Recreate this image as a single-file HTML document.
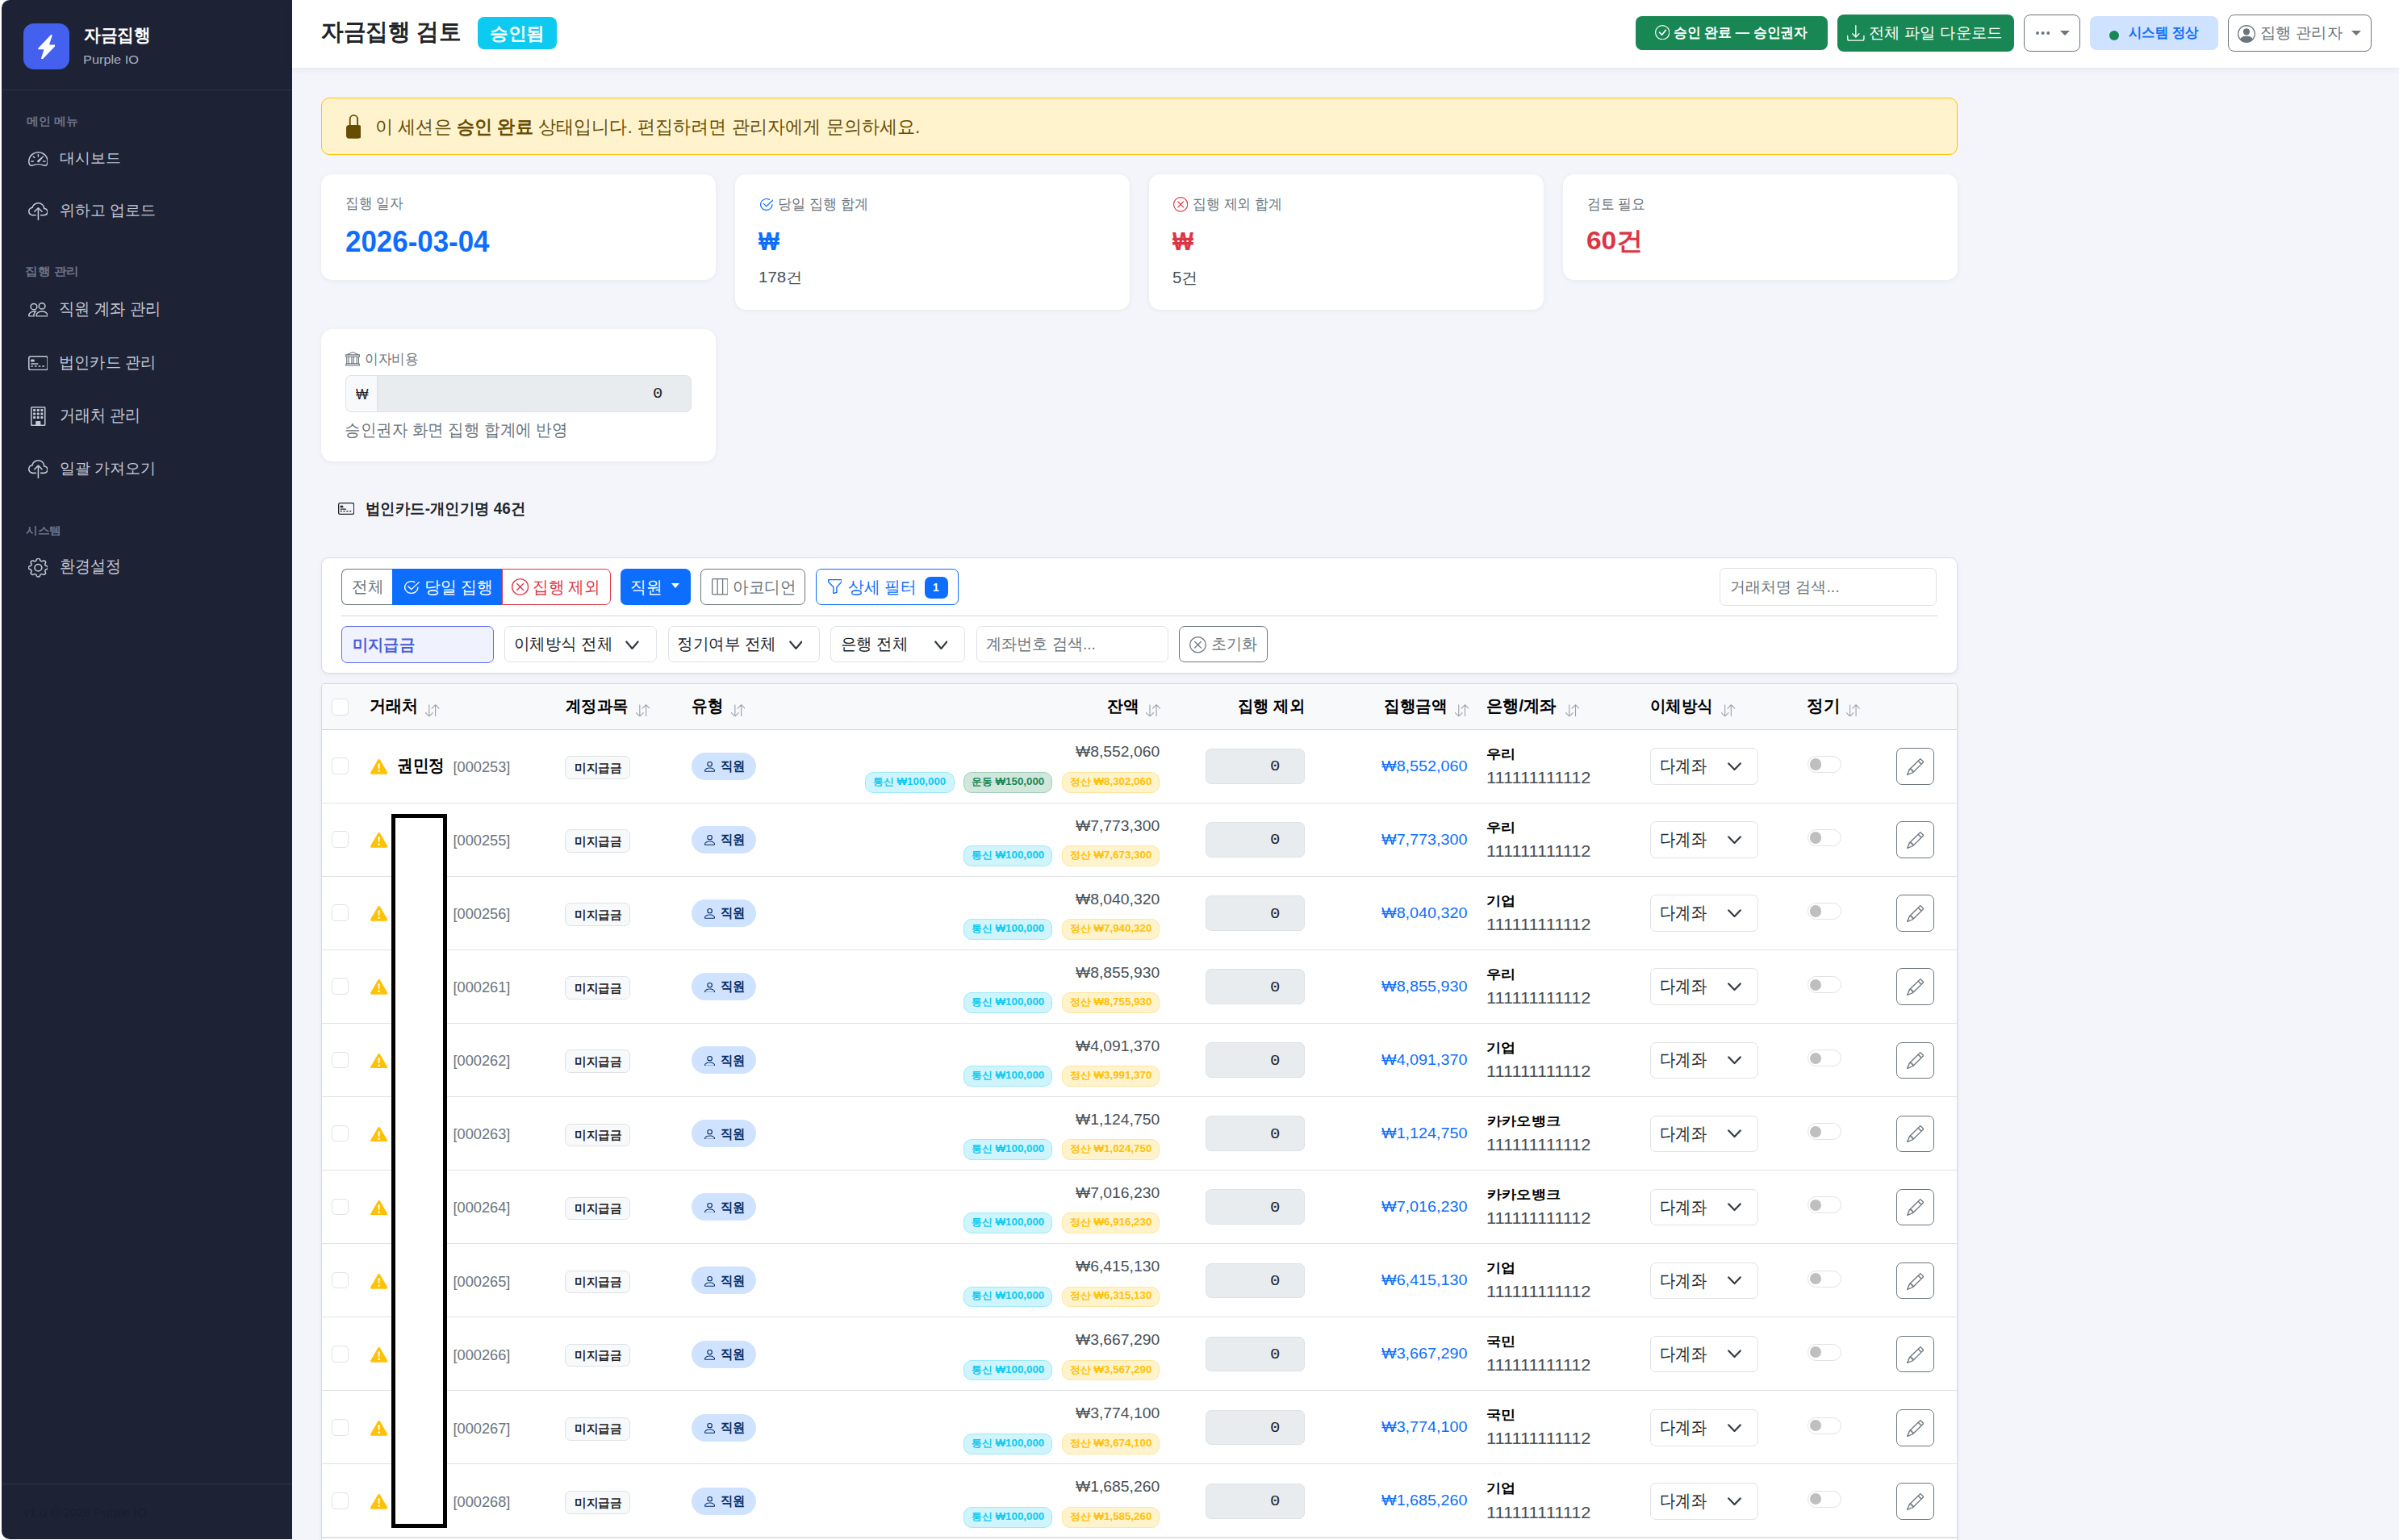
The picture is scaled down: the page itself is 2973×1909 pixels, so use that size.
<!DOCTYPE html><html lang='ko'><head><meta charset='utf-8'><title>자금집행 검토</title><style>html,body{margin:0;padding:0;width:2973px;height:1909px;overflow:hidden;background:#f3f4f9;}body{position:relative;font-family:"Liberation Sans", sans-serif;}b{font-weight:700}</style></head><body><div style='position:absolute;left:0px;top:0px;width:2973px;height:1909px;box-sizing:border-box;background:#f4f5fa'></div>
<div style='position:absolute;left:0px;top:0px;width:362px;height:1909px;box-sizing:border-box;background:#ffffff'></div>
<div style='position:absolute;left:2px;top:0px;width:360px;height:1908px;box-sizing:border-box;background:#1e2235;border-radius:10px 0 0 10px'></div>
<div style='position:absolute;left:2px;top:110.5px;width:360px;height:1.0px;box-sizing:border-box;background:#2e3346'></div>
<div style='position:absolute;left:2px;top:1839px;width:360px;height:1px;box-sizing:border-box;background:#2e3346'></div>
<div style='position:absolute;left:29px;top:29px;width:57px;height:57px;box-sizing:border-box;background:#4361ee;border-radius:13px'></div>
<svg style='position:absolute;left:46.7px;top:42.5px;width:21.599999999999994px;height:30.799999999999997px;' viewBox='2.45 0 11.1 16' fill='#ffffff' preserveAspectRatio='none'><path fill-rule='evenodd' d='M11.251.068a.5.5 0 0 1 .227.58L9.677 6.5H13a.5.5 0 0 1 .364.843l-8 8.5a.5.5 0 0 1-.842-.49L6.323 9.5H3a.5.5 0 0 1-.364-.843l8-8.5a.5.5 0 0 1 .615-.09z'/></svg>
<svg style='position:absolute;left:34.7px;top:188px;width:24.799999999999997px;height:18px;' viewBox='0 2 16 12.1' fill='#c3c8d4' preserveAspectRatio='none'><path fill-rule='evenodd' d='M8 4a.5.5 0 0 1 .5.5V6a.5.5 0 0 1-1 0V4.5A.5.5 0 0 1 8 4zM3.732 5.732a.5.5 0 0 1 .707 0l.915.914a.5.5 0 1 1-.708.708l-.914-.915a.5.5 0 0 1 0-.707zM2 10a.5.5 0 0 1 .5-.5h1.586a.5.5 0 0 1 0 1H2.5A.5.5 0 0 1 2 10zm9.5 0a.5.5 0 0 1 .5-.5h1.5a.5.5 0 0 1 0 1H12a.5.5 0 0 1-.5-.5zm.754-4.246a.389.389 0 0 0-.527-.02L7.547 9.31a.91.91 0 1 0 1.302 1.258l3.434-4.297a.389.389 0 0 0-.029-.518z'/><path fill-rule='evenodd' d='M0 10a8 8 0 1 1 15.547 2.661c-.442 1.253-1.845 1.602-2.932 1.25C11.309 13.488 9.475 13 8 13c-1.474 0-3.31.488-4.615.911-1.087.352-2.49.003-2.932-1.25A7.988 7.988 0 0 1 0 10zm8-7a7 7 0 0 0-6.603 9.329c.203.575.923.876 1.68.63C4.397 12.533 6.358 12 8 12s3.604.532 4.923.96c.757.245 1.477-.056 1.68-.631A7 7 0 0 0 8 3z'/></svg>
<svg style='position:absolute;left:34.7px;top:250.6px;width:24.799999999999997px;height:22.400000000000006px;' viewBox='0 0 16 15' fill='#c3c8d4' preserveAspectRatio='none'><path fill-rule='evenodd' d='M4.406 1.342A5.53 5.53 0 0 1 8 0c2.69 0 4.923 2 5.166 4.579C14.758 4.804 16 6.137 16 7.773 16 9.569 14.502 11 12.687 11H10a.5.5 0 0 1 0-1h2.688C13.979 10 15 8.988 15 7.773c0-1.216-1.02-2.228-2.313-2.228h-.5v-.5C12.188 2.825 10.328 1 8 1a4.53 4.53 0 0 0-2.941 1.1c-.757.652-1.153 1.438-1.153 2.055v.448l-.445.049C2.064 4.805 1 5.952 1 7.318 1 8.785 2.23 10 3.781 10H6a.5.5 0 0 1 0 1H3.781C1.708 11 0 9.366 0 7.318c0-1.763 1.266-3.223 2.942-3.593.143-.863.698-1.723 1.464-2.383z'/><path fill-rule='evenodd' d='M7.646 4.146a.5.5 0 0 1 .708 0l3 3a.5.5 0 0 1-.708.708L8.5 5.707V14.5a.5.5 0 0 1-1 0V5.707L5.354 7.854a.5.5 0 1 1-.708-.708l3-3z'/></svg>
<svg style='position:absolute;left:34.7px;top:375.4px;width:24.799999999999997px;height:17.600000000000023px;' viewBox='0 2 16 12' fill='#c3c8d4' preserveAspectRatio='none'><path fill-rule='evenodd' d='M15 14s1 0 1-1-1-4-5-4-5 3-5 4 1 1 1 1h8Zm-7.978-1A.261.261 0 0 1 7 12.996c.001-.264.167-1.03.76-1.72C8.312 10.629 9.282 10 11 10c1.717 0 2.687.63 3.24 1.276.593.69.758 1.457.76 1.72l-.008.002a.274.274 0 0 1-.014.002H7.022ZM11 7a2 2 0 1 0 0-4 2 2 0 0 0 0 4Zm3-2a3 3 0 1 1-6 0 3 3 0 0 1 6 0ZM6.936 9.28a5.88 5.88 0 0 0-1.23-.247A7.35 7.35 0 0 0 5 9c-4 0-5 3-5 4 0 .667.333 1 1 1h4.216A2.238 2.238 0 0 1 5 13c0-1.01.377-2.042 1.09-2.904.243-.294.526-.569.846-.816ZM4.92 10A5.493 5.493 0 0 0 4 13H1c0-.26.164-1.03.76-1.724.545-.636 1.492-1.256 3.16-1.275ZM1.5 5.5a3 3 0 1 1 6 0 3 3 0 0 1-6 0Zm3-2a2 2 0 1 0 0 4 2 2 0 0 0 0-4Z'/></svg>
<svg style='position:absolute;left:34.7px;top:440.7px;width:24.799999999999997px;height:18.30000000000001px;' viewBox='0 2 16 12' fill='#c3c8d4' preserveAspectRatio='none'><path fill-rule='evenodd' d='M14 3a1 1 0 0 1 1 1v8a1 1 0 0 1-1 1H2a1 1 0 0 1-1-1V4a1 1 0 0 1 1-1h12zM2 2a2 2 0 0 0-2 2v8a2 2 0 0 0 2 2h12a2 2 0 0 0 2-2V4a2 2 0 0 0-2-2H2z'/><path fill-rule='evenodd' d='M2 5.5a.5.5 0 0 1 .5-.5h2a.5.5 0 0 1 .5.5v1a.5.5 0 0 1-.5.5h-2a.5.5 0 0 1-.5-.5v-1zm0 3a.5.5 0 0 1 .5-.5h5a.5.5 0 0 1 0 1h-5a.5.5 0 0 1-.5-.5zm0 2a.5.5 0 0 1 .5-.5h1a.5.5 0 0 1 0 1h-1a.5.5 0 0 1-.5-.5zm3 0a.5.5 0 0 1 .5-.5h1a.5.5 0 0 1 0 1h-1a.5.5 0 0 1-.5-.5zm3 0a.5.5 0 0 1 .5-.5h1a.5.5 0 0 1 0 1h-1a.5.5 0 0 1-.5-.5zm3 0a.5.5 0 0 1 .5-.5h1a.5.5 0 0 1 0 1h-1a.5.5 0 0 1-.5-.5z'/></svg>
<svg style='position:absolute;left:38px;top:504px;width:18.5px;height:24px;' viewBox='2 0 12 16' fill='#c3c8d4' preserveAspectRatio='none'><path fill-rule='evenodd' d='M4 2.5a.5.5 0 0 1 .5-.5h1a.5.5 0 0 1 .5.5v1a.5.5 0 0 1-.5.5h-1a.5.5 0 0 1-.5-.5v-1Zm3 0a.5.5 0 0 1 .5-.5h1a.5.5 0 0 1 .5.5v1a.5.5 0 0 1-.5.5h-1a.5.5 0 0 1-.5-.5v-1Zm3.5-.5a.5.5 0 0 0-.5.5v1a.5.5 0 0 0 .5.5h1a.5.5 0 0 0 .5-.5v-1a.5.5 0 0 0-.5-.5h-1ZM4 5.5a.5.5 0 0 1 .5-.5h1a.5.5 0 0 1 .5.5v1a.5.5 0 0 1-.5.5h-1a.5.5 0 0 1-.5-.5v-1ZM7.5 5a.5.5 0 0 0-.5.5v1a.5.5 0 0 0 .5.5h1a.5.5 0 0 0 .5-.5v-1a.5.5 0 0 0-.5-.5h-1Zm2.5.5a.5.5 0 0 1 .5-.5h1a.5.5 0 0 1 .5.5v1a.5.5 0 0 1-.5.5h-1a.5.5 0 0 1-.5-.5v-1ZM4.5 8a.5.5 0 0 0-.5.5v1a.5.5 0 0 0 .5.5h1a.5.5 0 0 0 .5-.5v-1a.5.5 0 0 0-.5-.5h-1Zm2.5.5a.5.5 0 0 1 .5-.5h1a.5.5 0 0 1 .5.5v1a.5.5 0 0 1-.5.5h-1a.5.5 0 0 1-.5-.5v-1Zm3.5-.5a.5.5 0 0 0-.5.5v1a.5.5 0 0 0 .5.5h1a.5.5 0 0 0 .5-.5v-1a.5.5 0 0 0-.5-.5h-1Z'/><path fill-rule='evenodd' d='M2 1a1 1 0 0 1 1-1h10a1 1 0 0 1 1 1v14a1 1 0 0 1-1 1H3a1 1 0 0 1-1-1V1Zm11 0H3v14h3v-2.5a.5.5 0 0 1 .5-.5h3a.5.5 0 0 1 .5.5V15h3V1Z'/></svg>
<svg style='position:absolute;left:34.7px;top:569.6px;width:24.799999999999997px;height:23.399999999999977px;' viewBox='0 0 16 15' fill='#c3c8d4' preserveAspectRatio='none'><path fill-rule='evenodd' d='M4.406 1.342A5.53 5.53 0 0 1 8 0c2.69 0 4.923 2 5.166 4.579C14.758 4.804 16 6.137 16 7.773 16 9.569 14.502 11 12.687 11H10a.5.5 0 0 1 0-1h2.688C13.979 10 15 8.988 15 7.773c0-1.216-1.02-2.228-2.313-2.228h-.5v-.5C12.188 2.825 10.328 1 8 1a4.53 4.53 0 0 0-2.941 1.1c-.757.652-1.153 1.438-1.153 2.055v.448l-.445.049C2.064 4.805 1 5.952 1 7.318 1 8.785 2.23 10 3.781 10H6a.5.5 0 0 1 0 1H3.781C1.708 11 0 9.366 0 7.318c0-1.763 1.266-3.223 2.942-3.593.143-.863.698-1.723 1.464-2.383z'/><path fill-rule='evenodd' d='M7.646 4.146a.5.5 0 0 1 .708 0l3 3a.5.5 0 0 1-.708.708L8.5 5.707V14.5a.5.5 0 0 1-1 0V5.707L5.354 7.854a.5.5 0 1 1-.708-.708l3-3z'/></svg>
<svg style='position:absolute;left:34.7px;top:692.4px;width:24.799999999999997px;height:23.399999999999977px;' viewBox='0.3 0.3 15.4 15.4' fill='#c3c8d4' preserveAspectRatio='none'><path fill-rule='evenodd' d='M8 4.754a3.246 3.246 0 1 0 0 6.492 3.246 3.246 0 0 0 0-6.492zM5.754 8a2.246 2.246 0 1 1 4.492 0 2.246 2.246 0 0 1-4.492 0z'/><path fill-rule='evenodd' d='M9.796 1.343c-.527-1.79-3.065-1.79-3.592 0l-.094.319a.873.873 0 0 1-1.255.52l-.292-.16c-1.64-.892-3.433.902-2.54 2.541l.159.292a.873.873 0 0 1-.52 1.255l-.319.094c-1.79.527-1.79 3.065 0 3.592l.319.094a.873.873 0 0 1 .52 1.255l-.16.292c-.892 1.64.901 3.434 2.541 2.54l.292-.159a.873.873 0 0 1 1.255.52l.094.319c.527 1.79 3.065 1.79 3.592 0l.094-.319a.873.873 0 0 1 1.255-.52l.292.16c1.64.893 3.434-.902 2.54-2.541l-.159-.292a.873.873 0 0 1 .52-1.255l.319-.094c1.79-.527 1.79-3.065 0-3.592l-.319-.094a.873.873 0 0 1-.52-1.255l.16-.292c.893-1.64-.902-3.433-2.541-2.54l-.292.159a.873.873 0 0 1-1.255-.52l-.094-.319zm-2.633.283c.246-.835 1.428-.835 1.674 0l.094.319a1.873 1.873 0 0 0 2.693 1.115l.291-.16c.764-.415 1.6.42 1.184 1.185l-.159.292a1.873 1.873 0 0 0 1.116 2.692l.318.094c.835.246.835 1.428 0 1.674l-.319.094a1.873 1.873 0 0 0-1.115 2.693l.16.291c.415.764-.42 1.6-1.185 1.184l-.291-.159a1.873 1.873 0 0 0-2.693 1.116l-.094.318c-.246.835-1.428.835-1.674 0l-.094-.319a1.873 1.873 0 0 0-2.692-1.115l-.292.16c-.764.415-1.6-.42-1.184-1.185l.159-.291A1.873 1.873 0 0 0 1.945 8.93l-.319-.094c-.835-.246-.835-1.428 0-1.674l.319-.094A1.873 1.873 0 0 0 3.06 4.377l-.16-.292c-.415-.764.42-1.6 1.185-1.184l.292.159a1.873 1.873 0 0 0 2.692-1.115l.094-.319z'/></svg>
<div style='position:absolute;left:362px;top:0px;width:2611px;height:84px;box-sizing:border-box;background:#fff;box-shadow:0 2px 8px rgba(33,37,41,.07)'></div>
<div style='position:absolute;left:592px;top:21px;width:97.5px;height:40px;box-sizing:border-box;background:#0dcaf0;border-radius:8px'></div>
<div style='position:absolute;left:2027px;top:20px;width:238px;height:42px;box-sizing:border-box;background:#198754;border-radius:8px'></div>
<svg style='position:absolute;left:2051px;top:30.5px;width:18.40000000000009px;height:18.5px;' viewBox='0 0 16 16' fill='#fff' preserveAspectRatio='none'><path fill-rule='evenodd' d='M8 15A7 7 0 1 1 8 1a7 7 0 0 1 0 14zm0 1A8 8 0 1 0 8 0a8 8 0 0 0 0 16z'/><path fill-rule='evenodd' d='M10.97 4.97a.75.75 0 0 1 1.07 1.05l-3.992 4.99a.75.75 0 0 1-1.08.02L4.324 8.384a.75.75 0 1 1 1.06-1.06l2.094 2.093 3.473-4.425a.267.267 0 0 1 .02-.022z'/></svg>
<div style='position:absolute;left:2277px;top:18px;width:219px;height:46px;box-sizing:border-box;background:#198754;border-radius:8px'></div>
<svg style='position:absolute;left:2289px;top:31px;width:21.59999999999991px;height:20px;' viewBox='0 1 16 14' fill='#fff' preserveAspectRatio='none'><path fill-rule='evenodd' d='M.5 9.9a.5.5 0 0 1 .5.5v2.5a1 1 0 0 0 1 1h12a1 1 0 0 0 1-1v-2.5a.5.5 0 0 1 1 0v2.5a2 2 0 0 1-2 2H2a2 2 0 0 1-2-2v-2.5a.5.5 0 0 1 .5-.5z'/><path fill-rule='evenodd' d='M7.646 11.854a.5.5 0 0 0 .708 0l3-3a.5.5 0 0 0-.708-.708L8.5 10.293V1.5a.5.5 0 0 0-1 0v8.793L5.354 8.146a.5.5 0 1 0-.708.708l3 3z'/></svg>
<div style='position:absolute;left:2508px;top:18px;width:70px;height:46px;box-sizing:border-box;border:1.5px solid #6c757d;border-radius:8px;background:#fff'></div>
<svg style='position:absolute;left:2522.7px;top:39.2px;width:17.300000000000182px;height:4.0px;' viewBox='1.5 6.5 13 3' fill='#6c757d' preserveAspectRatio='none'><path fill-rule='evenodd' d='M3 9.5a1.5 1.5 0 1 1 0-3 1.5 1.5 0 0 1 0 3zm5 0a1.5 1.5 0 1 1 0-3 1.5 1.5 0 0 1 0 3zm5 0a1.5 1.5 0 1 1 0-3 1.5 1.5 0 0 1 0 3z'/></svg>
<div style='position:absolute;left:2552.9px;top:38px;width:0;height:0;border-left:6px solid transparent;border-right:6px solid transparent;border-top:6px solid #6c757d'></div>
<div style='position:absolute;left:2590px;top:20px;width:159px;height:42px;box-sizing:border-box;background:#cfe2ff;border-radius:8px'></div>
<div style='position:absolute;left:2613.8px;top:38.2px;width:12px;height:12px;border-radius:50%;background:#198754'></div>
<div style='position:absolute;left:2761px;top:18px;width:178px;height:46px;box-sizing:border-box;border:1.5px solid #6c757d;border-radius:8px;background:#fff'></div>
<svg style='position:absolute;left:2773px;top:31px;width:22px;height:22px;' viewBox='0 0 16 16' fill='#6c757d' preserveAspectRatio='none'><path fill-rule='evenodd' d='M11 6a3 3 0 1 1-6 0 3 3 0 0 1 6 0z'/><path fill-rule='evenodd' d='M0 8a8 8 0 1 1 16 0A8 8 0 0 1 0 8zm8-7a7 7 0 0 0-5.468 11.37C3.242 11.226 4.805 10 8 10s4.757 1.225 5.468 2.37A7 7 0 0 0 8 1z'/></svg>
<div style='position:absolute;left:2914px;top:38px;width:0;height:0;border-left:6px solid transparent;border-right:6px solid transparent;border-top:6px solid #6c757d'></div>
<div style='position:absolute;left:398px;top:121px;width:2028px;height:71px;box-sizing:border-box;background:#fff3cd;border:1.5px solid #ffc107;border-radius:10px'></div>
<svg style='position:absolute;left:428.7px;top:142px;width:18.80000000000001px;height:29.69999999999999px;' viewBox='3 0 10 16' fill='#664d03' preserveAspectRatio='none'><path fill-rule='evenodd' d='M8 1a2 2 0 0 1 2 2v4H6V3a2 2 0 0 1 2-2zm3 6V3a3 3 0 0 0-6 0v4a2 2 0 0 0-2 2v5a2 2 0 0 0 2 2h6a2 2 0 0 0 2-2V9a2 2 0 0 0-2-2z'/></svg>
<div style='position:absolute;left:398px;top:216px;width:489px;height:131px;box-sizing:border-box;background:#fff;border-radius:14px;box-shadow:0 1px 6px rgba(30,34,60,.06)'></div>
<div style='position:absolute;left:911px;top:216px;width:489px;height:168px;box-sizing:border-box;background:#fff;border-radius:14px;box-shadow:0 1px 6px rgba(30,34,60,.06)'></div>
<div style='position:absolute;left:1424px;top:216px;width:489px;height:168px;box-sizing:border-box;background:#fff;border-radius:14px;box-shadow:0 1px 6px rgba(30,34,60,.06)'></div>
<div style='position:absolute;left:1937px;top:216px;width:489px;height:131px;box-sizing:border-box;background:#fff;border-radius:14px;box-shadow:0 1px 6px rgba(30,34,60,.06)'></div>
<svg style='position:absolute;left:941.7px;top:245.5px;width:16.799999999999955px;height:15.0px;' viewBox='1.5 1.5 14 13' fill='#0d6efd' preserveAspectRatio='none'><path fill-rule='evenodd' d='M2.5 8a5.5 5.5 0 0 1 8.25-4.764.5.5 0 0 0 .5-.866A6.5 6.5 0 1 0 14.5 8a.5.5 0 0 0-1 0 5.5 5.5 0 1 1-11 0z'/><path fill-rule='evenodd' d='M15.354 3.354a.5.5 0 0 0-.708-.708L8 9.293 5.354 6.646a.5.5 0 1 0-.708.708l3 3a.5.5 0 0 0 .708 0l7-7z'/></svg>
<svg style='position:absolute;left:1453.75px;top:243.75px;width:18.25px;height:18.75px;' viewBox='0 0 16 16' fill='#dc3545' preserveAspectRatio='none'><path fill-rule='evenodd' d='M8 15A7 7 0 1 1 8 1a7 7 0 0 1 0 14zm0 1A8 8 0 1 0 8 0a8 8 0 0 0 0 16z'/><path fill-rule='evenodd' d='M4.646 4.646a.5.5 0 0 1 .708 0L8 7.293l2.646-2.647a.5.5 0 0 1 .708.708L8.707 8l2.647 2.646a.5.5 0 0 1-.708.708L8 8.707l-2.647 2.647a.5.5 0 0 1-.708-.708L7.293 8 4.646 5.354a.5.5 0 0 1 0-.708z'/></svg>
<div style='position:absolute;left:398px;top:408px;width:489px;height:163.5px;box-sizing:border-box;background:#fff;border-radius:14px;box-shadow:0 1px 6px rgba(30,34,60,.06)'></div>
<svg style='position:absolute;left:428px;top:436.4px;width:18.19999999999999px;height:17.600000000000023px;' viewBox='0 0 16 16' fill='#6c757d' preserveAspectRatio='none'><path fill-rule='evenodd' d='m8 0 6.61 3h.89a.5.5 0 0 1 .5.5v2a.5.5 0 0 1-.5.5H15v7a.5.5 0 0 1 .485.38l.5 2a.498.498 0 0 1-.485.62H.5a.498.498 0 0 1-.485-.62l.5-2A.501.501 0 0 1 1 13V6H.5a.5.5 0 0 1-.5-.5v-2A.5.5 0 0 1 .5 3h.89L8 0ZM3.777 3h8.447L8 1 3.777 3ZM2 6v7h1V6H2Zm2 0v7h2.5V6H4Zm3.5 0v7h1V6h-1Zm2 0v7H12V6H9.5ZM13 6v7h1V6h-1Zm2-1V4H1v1h14Zm-.39 9H1.39l-.25 1h13.72l-.25-1Z'/></svg>
<div style='position:absolute;left:428px;top:465px;width:429px;height:45.5px;box-sizing:border-box;border:1px solid #dee2e6;border-radius:7px;background:#e9ecef;overflow:hidden'></div>
<div style='position:absolute;left:429px;top:466px;width:39.30000000000001px;height:43.5px;box-sizing:border-box;background:#f8f9fa;border-radius:6px 0 0 6px;border-right:1px solid #dee2e6'></div>
<svg style='position:absolute;left:418.75px;top:623px;width:20.25px;height:15px;' viewBox='0 2 16 12' fill='#212529' preserveAspectRatio='none'><path fill-rule='evenodd' d='M14 3a1 1 0 0 1 1 1v8a1 1 0 0 1-1 1H2a1 1 0 0 1-1-1V4a1 1 0 0 1 1-1h12zM2 2a2 2 0 0 0-2 2v8a2 2 0 0 0 2 2h12a2 2 0 0 0 2-2V4a2 2 0 0 0-2-2H2z'/><path fill-rule='evenodd' d='M2 5.5a.5.5 0 0 1 .5-.5h2a.5.5 0 0 1 .5.5v1a.5.5 0 0 1-.5.5h-2a.5.5 0 0 1-.5-.5v-1zm0 3a.5.5 0 0 1 .5-.5h5a.5.5 0 0 1 0 1h-5a.5.5 0 0 1-.5-.5zm0 2a.5.5 0 0 1 .5-.5h1a.5.5 0 0 1 0 1h-1a.5.5 0 0 1-.5-.5zm3 0a.5.5 0 0 1 .5-.5h1a.5.5 0 0 1 0 1h-1a.5.5 0 0 1-.5-.5zm3 0a.5.5 0 0 1 .5-.5h1a.5.5 0 0 1 0 1h-1a.5.5 0 0 1-.5-.5zm3 0a.5.5 0 0 1 .5-.5h1a.5.5 0 0 1 0 1h-1a.5.5 0 0 1-.5-.5z'/></svg>
<div style='position:absolute;left:398px;top:691px;width:2028px;height:144px;box-sizing:border-box;background:#fff;border:1px solid #d9dde2;border-radius:9px;box-shadow:0 2px 6px rgba(0,0,0,.06)'></div>
<div style='position:absolute;left:423.3px;top:705px;width:62.89999999999998px;height:44.700000000000045px;box-sizing:border-box;border:1.5px solid #6c757d;border-right:none;border-radius:7px 0 0 7px;background:#fff'></div>
<div style='position:absolute;left:486.2px;top:705px;width:135.50000000000006px;height:44.700000000000045px;box-sizing:border-box;background:#0d6efd'></div>
<div style='position:absolute;left:621.7px;top:705px;width:135.0px;height:44.700000000000045px;box-sizing:border-box;border:1.5px solid #dc3545;border-radius:0 7px 7px 0;background:#fff'></div>
<svg style='position:absolute;left:500.8px;top:719.7px;width:18.900000000000034px;height:16.09999999999991px;' viewBox='1.5 1.5 14 13' fill='#fff' preserveAspectRatio='none'><path fill-rule='evenodd' d='M2.5 8a5.5 5.5 0 0 1 8.25-4.764.5.5 0 0 0 .5-.866A6.5 6.5 0 1 0 14.5 8a.5.5 0 0 0-1 0 5.5 5.5 0 1 1-11 0z'/><path fill-rule='evenodd' d='M15.354 3.354a.5.5 0 0 0-.708-.708L8 9.293 5.354 6.646a.5.5 0 1 0-.708.708l3 3a.5.5 0 0 0 .708 0l7-7z'/></svg>
<svg style='position:absolute;left:633.7px;top:717px;width:21.299999999999955px;height:21px;' viewBox='0 0 16 16' fill='#dc3545' preserveAspectRatio='none'><path fill-rule='evenodd' d='M8 15A7 7 0 1 1 8 1a7 7 0 0 1 0 14zm0 1A8 8 0 1 0 8 0a8 8 0 0 0 0 16z'/><path fill-rule='evenodd' d='M4.646 4.646a.5.5 0 0 1 .708 0L8 7.293l2.646-2.647a.5.5 0 0 1 .708.708L8.707 8l2.647 2.646a.5.5 0 0 1-.708.708L8 8.707l-2.647 2.647a.5.5 0 0 1-.708-.708L7.293 8 4.646 5.354a.5.5 0 0 1 0-.708z'/></svg>
<div style='position:absolute;left:769.2px;top:705px;width:86.59999999999991px;height:44.700000000000045px;box-sizing:border-box;background:#0d6efd;border-radius:7px'></div>
<div style='position:absolute;left:831.6px;top:723.4px;width:0;height:0;border-left:5.7px solid transparent;border-right:5.7px solid transparent;border-top:6.5px solid #fff'></div>
<div style='position:absolute;left:868.3px;top:705px;width:130.20000000000005px;height:44.700000000000045px;box-sizing:border-box;border:1.5px solid #6c757d;border-radius:7px;background:#fff'></div>
<svg style='position:absolute;left:881.5px;top:717px;width:20.700000000000045px;height:20.600000000000023px;' viewBox='0 0 16 16' fill='#6c757d' preserveAspectRatio='none'><path fill-rule='evenodd' d='M0 1.5A1.5 1.5 0 0 1 1.5 0h13A1.5 1.5 0 0 1 16 1.5v13a1.5 1.5 0 0 1-1.5 1.5h-13A1.5 1.5 0 0 1 0 14.5v-13zM1.5 1a.5.5 0 0 0-.5.5v13a.5.5 0 0 0 .5.5H5V1H1.5zM10 15V1H6v14h4zm1 0h3.5a.5.5 0 0 0 .5-.5v-13a.5.5 0 0 0-.5-.5H11v14z'/></svg>
<div style='position:absolute;left:1011.4px;top:705px;width:176.5000000000001px;height:44.700000000000045px;box-sizing:border-box;border:1.5px solid #0d6efd;border-radius:7px;background:#fff'></div>
<svg style='position:absolute;left:1025.7px;top:718px;width:17.799999999999955px;height:18.299999999999955px;' viewBox='1.5 1 13 14' fill='#0d6efd' preserveAspectRatio='none'><path fill-rule='evenodd' d='M1.5 1.5A.5.5 0 0 1 2 1h12a.5.5 0 0 1 .5.5v2a.5.5 0 0 1-.128.334L10 8.692V13.5a.5.5 0 0 1-.342.474l-3 1A.5.5 0 0 1 6 14.5V8.692L1.628 3.834A.5.5 0 0 1 1.5 3.5v-2zm1 .5v1.308l4.372 4.858A.5.5 0 0 1 7 8.5v5.306l2-.666V8.5a.5.5 0 0 1 .128-.334L13.5 3.308V2h-11z'/></svg>
<div style='position:absolute;left:1146.2px;top:715.2px;width:28.799999999999955px;height:26.59999999999991px;box-sizing:border-box;background:#0d6efd;border-radius:7px'></div>
<div style='position:absolute;left:2131.3px;top:704px;width:269.0px;height:46.799999999999955px;box-sizing:border-box;border:1px solid #dee2e6;border-radius:7px;background:#fff'></div>
<div style='position:absolute;left:423px;top:762.8px;width:1978px;height:1.1000000000000227px;box-sizing:border-box;background:#d3d7dc'></div>
<div style='position:absolute;left:423.3px;top:776.2px;width:189.2px;height:45.5px;box-sizing:border-box;border:1.5px solid #5b6cf0;border-radius:7px;background:#f0f3fe'></div>
<div style='position:absolute;left:625px;top:776.3px;width:189.25px;height:45.0px;box-sizing:border-box;border:1px solid #dee2e6;border-radius:7px;background:#fff'></div>
<svg style='position:absolute;left:775.3px;top:793.5px;width:16.90000000000009px;height:11.5px' viewBox='0 0 16 9' preserveAspectRatio='none'><path d='M1.2 1.2 8 7.8 14.8 1.2' fill='none' stroke='#343a40' stroke-width='2.2' stroke-linecap='round' stroke-linejoin='round' vector-effect='non-scaling-stroke'/></svg>
<div style='position:absolute;left:827.5px;top:776.3px;width:188.79999999999995px;height:45.0px;box-sizing:border-box;border:1px solid #dee2e6;border-radius:7px;background:#fff'></div>
<svg style='position:absolute;left:977.5px;top:793.5px;width:16.799999999999955px;height:11.5px' viewBox='0 0 16 9' preserveAspectRatio='none'><path d='M1.2 1.2 8 7.8 14.8 1.2' fill='none' stroke='#343a40' stroke-width='2.2' stroke-linecap='round' stroke-linejoin='round' vector-effect='non-scaling-stroke'/></svg>
<div style='position:absolute;left:1029.3px;top:776.3px;width:167.0px;height:45.0px;box-sizing:border-box;border:1px solid #dee2e6;border-radius:7px;background:#fff'></div>
<svg style='position:absolute;left:1157.5px;top:793.5px;width:16.700000000000045px;height:11.5px' viewBox='0 0 16 9' preserveAspectRatio='none'><path d='M1.2 1.2 8 7.8 14.8 1.2' fill='none' stroke='#343a40' stroke-width='2.2' stroke-linecap='round' stroke-linejoin='round' vector-effect='non-scaling-stroke'/></svg>
<div style='position:absolute;left:1209.5px;top:776.3px;width:238.79999999999995px;height:45.0px;box-sizing:border-box;border:1px solid #dee2e6;border-radius:7px;background:#fff'></div>
<div style='position:absolute;left:1461.2px;top:776.3px;width:110.09999999999991px;height:45.0px;box-sizing:border-box;border:1.5px solid #6c757d;border-radius:7px;background:#fff'></div>
<svg style='position:absolute;left:1473.7px;top:789.2px;width:21.0px;height:20.5px;' viewBox='0 0 16 16' fill='#6c757d' preserveAspectRatio='none'><path fill-rule='evenodd' d='M8 15A7 7 0 1 1 8 1a7 7 0 0 1 0 14zm0 1A8 8 0 1 0 8 0a8 8 0 0 0 0 16z'/><path fill-rule='evenodd' d='M4.646 4.646a.5.5 0 0 1 .708 0L8 7.293l2.646-2.647a.5.5 0 0 1 .708.708L8.707 8l2.647 2.646a.5.5 0 0 1-.708.708L8 8.707l-2.647 2.647a.5.5 0 0 1-.708-.708L7.293 8 4.646 5.354a.5.5 0 0 1 0-.708z'/></svg>
<div style='position:absolute;left:398px;top:847px;width:2028px;height:1113px;box-sizing:border-box;background:#fff;border:1px solid #d5d9de;border-radius:5px;box-shadow:0 1px 5px rgba(0,0,0,.06);overflow:hidden'></div>
<div style='position:absolute;left:399px;top:848px;width:2026px;height:56px;box-sizing:border-box;background:#f8f9fa;border-radius:4px 4px 0 0'></div>
<div style='position:absolute;left:399px;top:903.5px;width:2026px;height:1.5px;box-sizing:border-box;background:#ced4da'></div>
<div style='position:absolute;left:411.25px;top:866px;width:20.5px;height:20.700000000000045px;box-sizing:border-box;border:1px solid #dee2e6;border-radius:5px;background:#fff'></div>
<svg style='position:absolute;left:527px;top:872.5px;width:17.5px;height:15.5px;' viewBox='0.15 0.85 15.7 14.15' fill='#9aa1a9' preserveAspectRatio='none'><path fill-rule='evenodd' d='M11.5 15a.5.5 0 0 0 .5-.5V2.707l3.146 3.147a.5.5 0 0 0 .708-.708l-4-4a.5.5 0 0 0-.708 0l-4 4a.5.5 0 1 0 .708.708L11 2.707V14.5a.5.5 0 0 0 .5.5zm-7-14a.5.5 0 0 1 .5.5v11.793l3.146-3.147a.5.5 0 0 1 .708.708l-4 4a.5.5 0 0 1-.708 0l-4-4a.5.5 0 0 1 .708-.708L4 13.293V1.5a.5.5 0 0 1 .5-.5z'/></svg>
<svg style='position:absolute;left:787.5px;top:872.5px;width:17.5px;height:15.5px;' viewBox='0.15 0.85 15.7 14.15' fill='#9aa1a9' preserveAspectRatio='none'><path fill-rule='evenodd' d='M11.5 15a.5.5 0 0 0 .5-.5V2.707l3.146 3.147a.5.5 0 0 0 .708-.708l-4-4a.5.5 0 0 0-.708 0l-4 4a.5.5 0 1 0 .708.708L11 2.707V14.5a.5.5 0 0 0 .5.5zm-7-14a.5.5 0 0 1 .5.5v11.793l3.146-3.147a.5.5 0 0 1 .708.708l-4 4a.5.5 0 0 1-.708 0l-4-4a.5.5 0 0 1 .708-.708L4 13.293V1.5a.5.5 0 0 1 .5-.5z'/></svg>
<svg style='position:absolute;left:905.75px;top:872.5px;width:17.5px;height:15.5px;' viewBox='0.15 0.85 15.7 14.15' fill='#9aa1a9' preserveAspectRatio='none'><path fill-rule='evenodd' d='M11.5 15a.5.5 0 0 0 .5-.5V2.707l3.146 3.147a.5.5 0 0 0 .708-.708l-4-4a.5.5 0 0 0-.708 0l-4 4a.5.5 0 1 0 .708.708L11 2.707V14.5a.5.5 0 0 0 .5.5zm-7-14a.5.5 0 0 1 .5.5v11.793l3.146-3.147a.5.5 0 0 1 .708.708l-4 4a.5.5 0 0 1-.708 0l-4-4a.5.5 0 0 1 .708-.708L4 13.293V1.5a.5.5 0 0 1 .5-.5z'/></svg>
<svg style='position:absolute;left:1420px;top:872.5px;width:18px;height:15.5px;' viewBox='0.15 0.85 15.7 14.15' fill='#9aa1a9' preserveAspectRatio='none'><path fill-rule='evenodd' d='M11.5 15a.5.5 0 0 0 .5-.5V2.707l3.146 3.147a.5.5 0 0 0 .708-.708l-4-4a.5.5 0 0 0-.708 0l-4 4a.5.5 0 1 0 .708.708L11 2.707V14.5a.5.5 0 0 0 .5.5zm-7-14a.5.5 0 0 1 .5.5v11.793l3.146-3.147a.5.5 0 0 1 .708.708l-4 4a.5.5 0 0 1-.708 0l-4-4a.5.5 0 0 1 .708-.708L4 13.293V1.5a.5.5 0 0 1 .5-.5z'/></svg>
<svg style='position:absolute;left:1802.7px;top:872.5px;width:17.299999999999955px;height:15.5px;' viewBox='0.15 0.85 15.7 14.15' fill='#9aa1a9' preserveAspectRatio='none'><path fill-rule='evenodd' d='M11.5 15a.5.5 0 0 0 .5-.5V2.707l3.146 3.147a.5.5 0 0 0 .708-.708l-4-4a.5.5 0 0 0-.708 0l-4 4a.5.5 0 1 0 .708.708L11 2.707V14.5a.5.5 0 0 0 .5.5zm-7-14a.5.5 0 0 1 .5.5v11.793l3.146-3.147a.5.5 0 0 1 .708.708l-4 4a.5.5 0 0 1-.708 0l-4-4a.5.5 0 0 1 .708-.708L4 13.293V1.5a.5.5 0 0 1 .5-.5z'/></svg>
<svg style='position:absolute;left:1940px;top:872.5px;width:17.299999999999955px;height:15.5px;' viewBox='0.15 0.85 15.7 14.15' fill='#9aa1a9' preserveAspectRatio='none'><path fill-rule='evenodd' d='M11.5 15a.5.5 0 0 0 .5-.5V2.707l3.146 3.147a.5.5 0 0 0 .708-.708l-4-4a.5.5 0 0 0-.708 0l-4 4a.5.5 0 1 0 .708.708L11 2.707V14.5a.5.5 0 0 0 .5.5zm-7-14a.5.5 0 0 1 .5.5v11.793l3.146-3.147a.5.5 0 0 1 .708.708l-4 4a.5.5 0 0 1-.708 0l-4-4a.5.5 0 0 1 .708-.708L4 13.293V1.5a.5.5 0 0 1 .5-.5z'/></svg>
<svg style='position:absolute;left:2133px;top:872.5px;width:17px;height:15.5px;' viewBox='0.15 0.85 15.7 14.15' fill='#9aa1a9' preserveAspectRatio='none'><path fill-rule='evenodd' d='M11.5 15a.5.5 0 0 0 .5-.5V2.707l3.146 3.147a.5.5 0 0 0 .708-.708l-4-4a.5.5 0 0 0-.708 0l-4 4a.5.5 0 1 0 .708.708L11 2.707V14.5a.5.5 0 0 0 .5.5zm-7-14a.5.5 0 0 1 .5.5v11.793l3.146-3.147a.5.5 0 0 1 .708.708l-4 4a.5.5 0 0 1-.708 0l-4-4a.5.5 0 0 1 .708-.708L4 13.293V1.5a.5.5 0 0 1 .5-.5z'/></svg>
<svg style='position:absolute;left:2288.3px;top:872.5px;width:16.699999999999818px;height:15.5px;' viewBox='0.15 0.85 15.7 14.15' fill='#9aa1a9' preserveAspectRatio='none'><path fill-rule='evenodd' d='M11.5 15a.5.5 0 0 0 .5-.5V2.707l3.146 3.147a.5.5 0 0 0 .708-.708l-4-4a.5.5 0 0 0-.708 0l-4 4a.5.5 0 1 0 .708.708L11 2.707V14.5a.5.5 0 0 0 .5.5zm-7-14a.5.5 0 0 1 .5.5v11.793l3.146-3.147a.5.5 0 0 1 .708.708l-4 4a.5.5 0 0 1-.708 0l-4-4a.5.5 0 0 1 .708-.708L4 13.293V1.5a.5.5 0 0 1 .5-.5z'/></svg>
<div style='position:absolute;left:399px;top:994.58px;width:2026px;height:1.2000000000000455px;box-sizing:border-box;background:#dee2e6'></div>
<div style='position:absolute;left:411.25px;top:939.2px;width:20.5px;height:20.700000000000045px;box-sizing:border-box;border:1px solid #dee2e6;border-radius:5px;background:#fff'></div>
<svg style='position:absolute;left:458.75px;top:941.2px;width:21.25px;height:18.799999999999955px;' viewBox='0 1 16 14' fill='#ffc107' preserveAspectRatio='none'><path fill-rule='evenodd' d='M8.982 1.566a1.13 1.13 0 0 0-1.96 0L.165 13.233c-.457.778.091 1.767.98 1.767h13.713c.889 0 1.438-.99.98-1.767L8.982 1.566zM8 5c.535 0 .954.462.9.995l-.35 3.507a.552.552 0 0 1-1.1 0L7.1 5.995A.905.905 0 0 1 8 5zm.002 6a1 1 0 1 1 0 2 1 1 0 0 1 0-2z'/></svg>
<div style='position:absolute;left:700.3px;top:937.1px;width:80.5px;height:28.699999999999932px;box-sizing:border-box;border:1px solid #dee2e6;border-radius:7px;background:#f8f9fa'></div>
<div style='position:absolute;left:856.8px;top:932.9px;width:80.20000000000005px;height:34.0px;box-sizing:border-box;background:#cfe2ff;border-radius:17px'></div>
<svg style='position:absolute;left:872.9px;top:944.3px;width:13.200000000000045px;height:12.700000000000045px;' viewBox='2 2 12 12' fill='#052c65' preserveAspectRatio='none'><path fill-rule='evenodd' d='M8 8a3 3 0 1 0 0-6 3 3 0 0 0 0 6Zm2-3a2 2 0 1 1-4 0 2 2 0 0 1 4 0Zm4 8c0 1-1 1-1 1H3s-1 0-1-1 1-4 6-4 6 3 6 4Zm-1-.004c-.001-.246-.154-.986-.832-1.664C11.516 10.68 10.289 10 8 10c-2.29 0-3.516.68-4.168 1.332-.678.678-.83 1.418-.832 1.664h10Z'/></svg>
<div style='position:absolute;left:1493.75px;top:928.0px;width:123.0px;height:43.75px;box-sizing:border-box;border:1px solid #dee2e6;border-radius:7px;background:#e9ecef'></div>
<div style='position:absolute;left:2045.3px;top:927.2px;width:134.20000000000005px;height:45.59999999999991px;box-sizing:border-box;border:1px solid #dee2e6;border-radius:7px;background:#fff'></div>
<svg style='position:absolute;left:2140.5px;top:944.8px;width:17.0px;height:10.400000000000091px' viewBox='0 0 16 9' preserveAspectRatio='none'><path d='M1.2 1.2 8 7.8 14.8 1.2' fill='none' stroke='#343a40' stroke-width='2.2' stroke-linecap='round' stroke-linejoin='round' vector-effect='non-scaling-stroke'/></svg>
<div style='position:absolute;left:2240px;top:937.0px;width:41.69999999999982px;height:21.0px;box-sizing:border-box;border:1px solid #dee2e6;border-radius:11px;background:#fff'></div>
<div style='position:absolute;left:2243.2px;top:940.3px;width:14.3px;height:14.3px;border-radius:50%;background:#bfbfbf'></div>
<div style='position:absolute;left:2350px;top:927.2px;width:46.69999999999982px;height:45.59999999999991px;box-sizing:border-box;border:1.5px solid #6c757d;border-radius:7px;background:#fff'></div>
<svg style='position:absolute;left:2362.5px;top:940.0px;width:21.5px;height:21.0px;' viewBox='0 0 16 16' fill='#6c757d' preserveAspectRatio='none'><path fill-rule='evenodd' d='M12.146.146a.5.5 0 0 1 .708 0l3 3a.5.5 0 0 1 0 .708l-10 10a.5.5 0 0 1-.168.11l-5 2a.5.5 0 0 1-.65-.65l2-5a.5.5 0 0 1 .11-.168l10-10zM11.207 2.5 13.5 4.793 14.793 3.5 12.5 1.207 11.207 2.5zm1.586 3L10.5 3.207 4 9.707V10h.5a.5.5 0 0 1 .5.5v.5h.5a.5.5 0 0 1 .5.5v.5h.293l6.5-6.5zm-9.761 5.175-.106.106-1.528 3.821 3.821-1.528.106-.106A.5.5 0 0 1 5 12.5V12h-.5a.5.5 0 0 1-.5-.5V11h-.5a.5.5 0 0 1-.468-.325z'/></svg>
<div style='position:absolute;left:399px;top:1085.66px;width:2026px;height:1.2000000000000455px;box-sizing:border-box;background:#dee2e6'></div>
<div style='position:absolute;left:411.25px;top:1030.28px;width:20.5px;height:20.700000000000045px;box-sizing:border-box;border:1px solid #dee2e6;border-radius:5px;background:#fff'></div>
<svg style='position:absolute;left:458.75px;top:1032.28px;width:21.25px;height:18.799999999999955px;' viewBox='0 1 16 14' fill='#ffc107' preserveAspectRatio='none'><path fill-rule='evenodd' d='M8.982 1.566a1.13 1.13 0 0 0-1.96 0L.165 13.233c-.457.778.091 1.767.98 1.767h13.713c.889 0 1.438-.99.98-1.767L8.982 1.566zM8 5c.535 0 .954.462.9.995l-.35 3.507a.552.552 0 0 1-1.1 0L7.1 5.995A.905.905 0 0 1 8 5zm.002 6a1 1 0 1 1 0 2 1 1 0 0 1 0-2z'/></svg>
<div style='position:absolute;left:700.3px;top:1028.18px;width:80.5px;height:28.700000000000045px;box-sizing:border-box;border:1px solid #dee2e6;border-radius:7px;background:#f8f9fa'></div>
<div style='position:absolute;left:856.8px;top:1023.98px;width:80.20000000000005px;height:34.0px;box-sizing:border-box;background:#cfe2ff;border-radius:17px'></div>
<svg style='position:absolute;left:872.9px;top:1035.38px;width:13.200000000000045px;height:12.699999999999818px;' viewBox='2 2 12 12' fill='#052c65' preserveAspectRatio='none'><path fill-rule='evenodd' d='M8 8a3 3 0 1 0 0-6 3 3 0 0 0 0 6Zm2-3a2 2 0 1 1-4 0 2 2 0 0 1 4 0Zm4 8c0 1-1 1-1 1H3s-1 0-1-1 1-4 6-4 6 3 6 4Zm-1-.004c-.001-.246-.154-.986-.832-1.664C11.516 10.68 10.289 10 8 10c-2.29 0-3.516.68-4.168 1.332-.678.678-.83 1.418-.832 1.664h10Z'/></svg>
<div style='position:absolute;left:1493.75px;top:1019.08px;width:123.0px;height:43.749999999999886px;box-sizing:border-box;border:1px solid #dee2e6;border-radius:7px;background:#e9ecef'></div>
<div style='position:absolute;left:2045.3px;top:1018.2800000000001px;width:134.20000000000005px;height:45.60000000000002px;box-sizing:border-box;border:1px solid #dee2e6;border-radius:7px;background:#fff'></div>
<svg style='position:absolute;left:2140.5px;top:1035.88px;width:17.0px;height:10.399999999999864px' viewBox='0 0 16 9' preserveAspectRatio='none'><path d='M1.2 1.2 8 7.8 14.8 1.2' fill='none' stroke='#343a40' stroke-width='2.2' stroke-linecap='round' stroke-linejoin='round' vector-effect='non-scaling-stroke'/></svg>
<div style='position:absolute;left:2240px;top:1028.08px;width:41.69999999999982px;height:21.0px;box-sizing:border-box;border:1px solid #dee2e6;border-radius:11px;background:#fff'></div>
<div style='position:absolute;left:2243.2px;top:1031.38px;width:14.3px;height:14.3px;border-radius:50%;background:#bfbfbf'></div>
<div style='position:absolute;left:2350px;top:1018.2800000000001px;width:46.69999999999982px;height:45.60000000000002px;box-sizing:border-box;border:1.5px solid #6c757d;border-radius:7px;background:#fff'></div>
<svg style='position:absolute;left:2362.5px;top:1031.08px;width:21.5px;height:21.0px;' viewBox='0 0 16 16' fill='#6c757d' preserveAspectRatio='none'><path fill-rule='evenodd' d='M12.146.146a.5.5 0 0 1 .708 0l3 3a.5.5 0 0 1 0 .708l-10 10a.5.5 0 0 1-.168.11l-5 2a.5.5 0 0 1-.65-.65l2-5a.5.5 0 0 1 .11-.168l10-10zM11.207 2.5 13.5 4.793 14.793 3.5 12.5 1.207 11.207 2.5zm1.586 3L10.5 3.207 4 9.707V10h.5a.5.5 0 0 1 .5.5v.5h.5a.5.5 0 0 1 .5.5v.5h.293l6.5-6.5zm-9.761 5.175-.106.106-1.528 3.821 3.821-1.528.106-.106A.5.5 0 0 1 5 12.5V12h-.5a.5.5 0 0 1-.5-.5V11h-.5a.5.5 0 0 1-.468-.325z'/></svg>
<div style='position:absolute;left:399px;top:1176.74px;width:2026px;height:1.2000000000000455px;box-sizing:border-box;background:#dee2e6'></div>
<div style='position:absolute;left:411.25px;top:1121.3600000000001px;width:20.5px;height:20.700000000000045px;box-sizing:border-box;border:1px solid #dee2e6;border-radius:5px;background:#fff'></div>
<svg style='position:absolute;left:458.75px;top:1123.3600000000001px;width:21.25px;height:18.799999999999955px;' viewBox='0 1 16 14' fill='#ffc107' preserveAspectRatio='none'><path fill-rule='evenodd' d='M8.982 1.566a1.13 1.13 0 0 0-1.96 0L.165 13.233c-.457.778.091 1.767.98 1.767h13.713c.889 0 1.438-.99.98-1.767L8.982 1.566zM8 5c.535 0 .954.462.9.995l-.35 3.507a.552.552 0 0 1-1.1 0L7.1 5.995A.905.905 0 0 1 8 5zm.002 6a1 1 0 1 1 0 2 1 1 0 0 1 0-2z'/></svg>
<div style='position:absolute;left:700.3px;top:1119.26px;width:80.5px;height:28.700000000000045px;box-sizing:border-box;border:1px solid #dee2e6;border-radius:7px;background:#f8f9fa'></div>
<div style='position:absolute;left:856.8px;top:1115.0600000000002px;width:80.20000000000005px;height:34.0px;box-sizing:border-box;background:#cfe2ff;border-radius:17px'></div>
<svg style='position:absolute;left:872.9px;top:1126.46px;width:13.200000000000045px;height:12.700000000000045px;' viewBox='2 2 12 12' fill='#052c65' preserveAspectRatio='none'><path fill-rule='evenodd' d='M8 8a3 3 0 1 0 0-6 3 3 0 0 0 0 6Zm2-3a2 2 0 1 1-4 0 2 2 0 0 1 4 0Zm4 8c0 1-1 1-1 1H3s-1 0-1-1 1-4 6-4 6 3 6 4Zm-1-.004c-.001-.246-.154-.986-.832-1.664C11.516 10.68 10.289 10 8 10c-2.29 0-3.516.68-4.168 1.332-.678.678-.83 1.418-.832 1.664h10Z'/></svg>
<div style='position:absolute;left:1493.75px;top:1110.16px;width:123.0px;height:43.75px;box-sizing:border-box;border:1px solid #dee2e6;border-radius:7px;background:#e9ecef'></div>
<div style='position:absolute;left:2045.3px;top:1109.3600000000001px;width:134.20000000000005px;height:45.59999999999991px;box-sizing:border-box;border:1px solid #dee2e6;border-radius:7px;background:#fff'></div>
<svg style='position:absolute;left:2140.5px;top:1126.96px;width:17.0px;height:10.400000000000091px' viewBox='0 0 16 9' preserveAspectRatio='none'><path d='M1.2 1.2 8 7.8 14.8 1.2' fill='none' stroke='#343a40' stroke-width='2.2' stroke-linecap='round' stroke-linejoin='round' vector-effect='non-scaling-stroke'/></svg>
<div style='position:absolute;left:2240px;top:1119.16px;width:41.69999999999982px;height:21.0px;box-sizing:border-box;border:1px solid #dee2e6;border-radius:11px;background:#fff'></div>
<div style='position:absolute;left:2243.2px;top:1122.46px;width:14.3px;height:14.3px;border-radius:50%;background:#bfbfbf'></div>
<div style='position:absolute;left:2350px;top:1109.3600000000001px;width:46.69999999999982px;height:45.59999999999991px;box-sizing:border-box;border:1.5px solid #6c757d;border-radius:7px;background:#fff'></div>
<svg style='position:absolute;left:2362.5px;top:1122.16px;width:21.5px;height:21.0px;' viewBox='0 0 16 16' fill='#6c757d' preserveAspectRatio='none'><path fill-rule='evenodd' d='M12.146.146a.5.5 0 0 1 .708 0l3 3a.5.5 0 0 1 0 .708l-10 10a.5.5 0 0 1-.168.11l-5 2a.5.5 0 0 1-.65-.65l2-5a.5.5 0 0 1 .11-.168l10-10zM11.207 2.5 13.5 4.793 14.793 3.5 12.5 1.207 11.207 2.5zm1.586 3L10.5 3.207 4 9.707V10h.5a.5.5 0 0 1 .5.5v.5h.5a.5.5 0 0 1 .5.5v.5h.293l6.5-6.5zm-9.761 5.175-.106.106-1.528 3.821 3.821-1.528.106-.106A.5.5 0 0 1 5 12.5V12h-.5a.5.5 0 0 1-.5-.5V11h-.5a.5.5 0 0 1-.468-.325z'/></svg>
<div style='position:absolute;left:399px;top:1267.82px;width:2026px;height:1.2000000000000455px;box-sizing:border-box;background:#dee2e6'></div>
<div style='position:absolute;left:411.25px;top:1212.44px;width:20.5px;height:20.700000000000045px;box-sizing:border-box;border:1px solid #dee2e6;border-radius:5px;background:#fff'></div>
<svg style='position:absolute;left:458.75px;top:1214.44px;width:21.25px;height:18.799999999999955px;' viewBox='0 1 16 14' fill='#ffc107' preserveAspectRatio='none'><path fill-rule='evenodd' d='M8.982 1.566a1.13 1.13 0 0 0-1.96 0L.165 13.233c-.457.778.091 1.767.98 1.767h13.713c.889 0 1.438-.99.98-1.767L8.982 1.566zM8 5c.535 0 .954.462.9.995l-.35 3.507a.552.552 0 0 1-1.1 0L7.1 5.995A.905.905 0 0 1 8 5zm.002 6a1 1 0 1 1 0 2 1 1 0 0 1 0-2z'/></svg>
<div style='position:absolute;left:700.3px;top:1210.34px;width:80.5px;height:28.700000000000045px;box-sizing:border-box;border:1px solid #dee2e6;border-radius:7px;background:#f8f9fa'></div>
<div style='position:absolute;left:856.8px;top:1206.14px;width:80.20000000000005px;height:34.0px;box-sizing:border-box;background:#cfe2ff;border-radius:17px'></div>
<svg style='position:absolute;left:872.9px;top:1217.54px;width:13.200000000000045px;height:12.700000000000045px;' viewBox='2 2 12 12' fill='#052c65' preserveAspectRatio='none'><path fill-rule='evenodd' d='M8 8a3 3 0 1 0 0-6 3 3 0 0 0 0 6Zm2-3a2 2 0 1 1-4 0 2 2 0 0 1 4 0Zm4 8c0 1-1 1-1 1H3s-1 0-1-1 1-4 6-4 6 3 6 4Zm-1-.004c-.001-.246-.154-.986-.832-1.664C11.516 10.68 10.289 10 8 10c-2.29 0-3.516.68-4.168 1.332-.678.678-.83 1.418-.832 1.664h10Z'/></svg>
<div style='position:absolute;left:1493.75px;top:1201.24px;width:123.0px;height:43.75px;box-sizing:border-box;border:1px solid #dee2e6;border-radius:7px;background:#e9ecef'></div>
<div style='position:absolute;left:2045.3px;top:1200.44px;width:134.20000000000005px;height:45.59999999999991px;box-sizing:border-box;border:1px solid #dee2e6;border-radius:7px;background:#fff'></div>
<svg style='position:absolute;left:2140.5px;top:1218.04px;width:17.0px;height:10.400000000000091px' viewBox='0 0 16 9' preserveAspectRatio='none'><path d='M1.2 1.2 8 7.8 14.8 1.2' fill='none' stroke='#343a40' stroke-width='2.2' stroke-linecap='round' stroke-linejoin='round' vector-effect='non-scaling-stroke'/></svg>
<div style='position:absolute;left:2240px;top:1210.24px;width:41.69999999999982px;height:21.0px;box-sizing:border-box;border:1px solid #dee2e6;border-radius:11px;background:#fff'></div>
<div style='position:absolute;left:2243.2px;top:1213.54px;width:14.3px;height:14.3px;border-radius:50%;background:#bfbfbf'></div>
<div style='position:absolute;left:2350px;top:1200.44px;width:46.69999999999982px;height:45.59999999999991px;box-sizing:border-box;border:1.5px solid #6c757d;border-radius:7px;background:#fff'></div>
<svg style='position:absolute;left:2362.5px;top:1213.24px;width:21.5px;height:21.0px;' viewBox='0 0 16 16' fill='#6c757d' preserveAspectRatio='none'><path fill-rule='evenodd' d='M12.146.146a.5.5 0 0 1 .708 0l3 3a.5.5 0 0 1 0 .708l-10 10a.5.5 0 0 1-.168.11l-5 2a.5.5 0 0 1-.65-.65l2-5a.5.5 0 0 1 .11-.168l10-10zM11.207 2.5 13.5 4.793 14.793 3.5 12.5 1.207 11.207 2.5zm1.586 3L10.5 3.207 4 9.707V10h.5a.5.5 0 0 1 .5.5v.5h.5a.5.5 0 0 1 .5.5v.5h.293l6.5-6.5zm-9.761 5.175-.106.106-1.528 3.821 3.821-1.528.106-.106A.5.5 0 0 1 5 12.5V12h-.5a.5.5 0 0 1-.5-.5V11h-.5a.5.5 0 0 1-.468-.325z'/></svg>
<div style='position:absolute;left:399px;top:1358.8999999999999px;width:2026px;height:1.2000000000000455px;box-sizing:border-box;background:#dee2e6'></div>
<div style='position:absolute;left:411.25px;top:1303.52px;width:20.5px;height:20.700000000000045px;box-sizing:border-box;border:1px solid #dee2e6;border-radius:5px;background:#fff'></div>
<svg style='position:absolute;left:458.75px;top:1305.52px;width:21.25px;height:18.799999999999955px;' viewBox='0 1 16 14' fill='#ffc107' preserveAspectRatio='none'><path fill-rule='evenodd' d='M8.982 1.566a1.13 1.13 0 0 0-1.96 0L.165 13.233c-.457.778.091 1.767.98 1.767h13.713c.889 0 1.438-.99.98-1.767L8.982 1.566zM8 5c.535 0 .954.462.9.995l-.35 3.507a.552.552 0 0 1-1.1 0L7.1 5.995A.905.905 0 0 1 8 5zm.002 6a1 1 0 1 1 0 2 1 1 0 0 1 0-2z'/></svg>
<div style='position:absolute;left:700.3px;top:1301.4199999999998px;width:80.5px;height:28.700000000000045px;box-sizing:border-box;border:1px solid #dee2e6;border-radius:7px;background:#f8f9fa'></div>
<div style='position:absolute;left:856.8px;top:1297.22px;width:80.20000000000005px;height:34.0px;box-sizing:border-box;background:#cfe2ff;border-radius:17px'></div>
<svg style='position:absolute;left:872.9px;top:1308.62px;width:13.200000000000045px;height:12.700000000000045px;' viewBox='2 2 12 12' fill='#052c65' preserveAspectRatio='none'><path fill-rule='evenodd' d='M8 8a3 3 0 1 0 0-6 3 3 0 0 0 0 6Zm2-3a2 2 0 1 1-4 0 2 2 0 0 1 4 0Zm4 8c0 1-1 1-1 1H3s-1 0-1-1 1-4 6-4 6 3 6 4Zm-1-.004c-.001-.246-.154-.986-.832-1.664C11.516 10.68 10.289 10 8 10c-2.29 0-3.516.68-4.168 1.332-.678.678-.83 1.418-.832 1.664h10Z'/></svg>
<div style='position:absolute;left:1493.75px;top:1292.32px;width:123.0px;height:43.75px;box-sizing:border-box;border:1px solid #dee2e6;border-radius:7px;background:#e9ecef'></div>
<div style='position:absolute;left:2045.3px;top:1291.52px;width:134.20000000000005px;height:45.59999999999991px;box-sizing:border-box;border:1px solid #dee2e6;border-radius:7px;background:#fff'></div>
<svg style='position:absolute;left:2140.5px;top:1309.12px;width:17.0px;height:10.400000000000091px' viewBox='0 0 16 9' preserveAspectRatio='none'><path d='M1.2 1.2 8 7.8 14.8 1.2' fill='none' stroke='#343a40' stroke-width='2.2' stroke-linecap='round' stroke-linejoin='round' vector-effect='non-scaling-stroke'/></svg>
<div style='position:absolute;left:2240px;top:1301.32px;width:41.69999999999982px;height:21.0px;box-sizing:border-box;border:1px solid #dee2e6;border-radius:11px;background:#fff'></div>
<div style='position:absolute;left:2243.2px;top:1304.62px;width:14.3px;height:14.3px;border-radius:50%;background:#bfbfbf'></div>
<div style='position:absolute;left:2350px;top:1291.52px;width:46.69999999999982px;height:45.59999999999991px;box-sizing:border-box;border:1.5px solid #6c757d;border-radius:7px;background:#fff'></div>
<svg style='position:absolute;left:2362.5px;top:1304.32px;width:21.5px;height:21.0px;' viewBox='0 0 16 16' fill='#6c757d' preserveAspectRatio='none'><path fill-rule='evenodd' d='M12.146.146a.5.5 0 0 1 .708 0l3 3a.5.5 0 0 1 0 .708l-10 10a.5.5 0 0 1-.168.11l-5 2a.5.5 0 0 1-.65-.65l2-5a.5.5 0 0 1 .11-.168l10-10zM11.207 2.5 13.5 4.793 14.793 3.5 12.5 1.207 11.207 2.5zm1.586 3L10.5 3.207 4 9.707V10h.5a.5.5 0 0 1 .5.5v.5h.5a.5.5 0 0 1 .5.5v.5h.293l6.5-6.5zm-9.761 5.175-.106.106-1.528 3.821 3.821-1.528.106-.106A.5.5 0 0 1 5 12.5V12h-.5a.5.5 0 0 1-.5-.5V11h-.5a.5.5 0 0 1-.468-.325z'/></svg>
<div style='position:absolute;left:399px;top:1449.98px;width:2026px;height:1.2000000000000455px;box-sizing:border-box;background:#dee2e6'></div>
<div style='position:absolute;left:411.25px;top:1394.6000000000001px;width:20.5px;height:20.700000000000045px;box-sizing:border-box;border:1px solid #dee2e6;border-radius:5px;background:#fff'></div>
<svg style='position:absolute;left:458.75px;top:1396.6000000000001px;width:21.25px;height:18.799999999999955px;' viewBox='0 1 16 14' fill='#ffc107' preserveAspectRatio='none'><path fill-rule='evenodd' d='M8.982 1.566a1.13 1.13 0 0 0-1.96 0L.165 13.233c-.457.778.091 1.767.98 1.767h13.713c.889 0 1.438-.99.98-1.767L8.982 1.566zM8 5c.535 0 .954.462.9.995l-.35 3.507a.552.552 0 0 1-1.1 0L7.1 5.995A.905.905 0 0 1 8 5zm.002 6a1 1 0 1 1 0 2 1 1 0 0 1 0-2z'/></svg>
<div style='position:absolute;left:700.3px;top:1392.5px;width:80.5px;height:28.700000000000045px;box-sizing:border-box;border:1px solid #dee2e6;border-radius:7px;background:#f8f9fa'></div>
<div style='position:absolute;left:856.8px;top:1388.3000000000002px;width:80.20000000000005px;height:34.0px;box-sizing:border-box;background:#cfe2ff;border-radius:17px'></div>
<svg style='position:absolute;left:872.9px;top:1399.7px;width:13.200000000000045px;height:12.700000000000045px;' viewBox='2 2 12 12' fill='#052c65' preserveAspectRatio='none'><path fill-rule='evenodd' d='M8 8a3 3 0 1 0 0-6 3 3 0 0 0 0 6Zm2-3a2 2 0 1 1-4 0 2 2 0 0 1 4 0Zm4 8c0 1-1 1-1 1H3s-1 0-1-1 1-4 6-4 6 3 6 4Zm-1-.004c-.001-.246-.154-.986-.832-1.664C11.516 10.68 10.289 10 8 10c-2.29 0-3.516.68-4.168 1.332-.678.678-.83 1.418-.832 1.664h10Z'/></svg>
<div style='position:absolute;left:1493.75px;top:1383.4px;width:123.0px;height:43.75px;box-sizing:border-box;border:1px solid #dee2e6;border-radius:7px;background:#e9ecef'></div>
<div style='position:absolute;left:2045.3px;top:1382.6000000000001px;width:134.20000000000005px;height:45.59999999999991px;box-sizing:border-box;border:1px solid #dee2e6;border-radius:7px;background:#fff'></div>
<svg style='position:absolute;left:2140.5px;top:1400.2px;width:17.0px;height:10.400000000000091px' viewBox='0 0 16 9' preserveAspectRatio='none'><path d='M1.2 1.2 8 7.8 14.8 1.2' fill='none' stroke='#343a40' stroke-width='2.2' stroke-linecap='round' stroke-linejoin='round' vector-effect='non-scaling-stroke'/></svg>
<div style='position:absolute;left:2240px;top:1392.4px;width:41.69999999999982px;height:21.0px;box-sizing:border-box;border:1px solid #dee2e6;border-radius:11px;background:#fff'></div>
<div style='position:absolute;left:2243.2px;top:1395.7px;width:14.3px;height:14.3px;border-radius:50%;background:#bfbfbf'></div>
<div style='position:absolute;left:2350px;top:1382.6000000000001px;width:46.69999999999982px;height:45.59999999999991px;box-sizing:border-box;border:1.5px solid #6c757d;border-radius:7px;background:#fff'></div>
<svg style='position:absolute;left:2362.5px;top:1395.4px;width:21.5px;height:21.0px;' viewBox='0 0 16 16' fill='#6c757d' preserveAspectRatio='none'><path fill-rule='evenodd' d='M12.146.146a.5.5 0 0 1 .708 0l3 3a.5.5 0 0 1 0 .708l-10 10a.5.5 0 0 1-.168.11l-5 2a.5.5 0 0 1-.65-.65l2-5a.5.5 0 0 1 .11-.168l10-10zM11.207 2.5 13.5 4.793 14.793 3.5 12.5 1.207 11.207 2.5zm1.586 3L10.5 3.207 4 9.707V10h.5a.5.5 0 0 1 .5.5v.5h.5a.5.5 0 0 1 .5.5v.5h.293l6.5-6.5zm-9.761 5.175-.106.106-1.528 3.821 3.821-1.528.106-.106A.5.5 0 0 1 5 12.5V12h-.5a.5.5 0 0 1-.5-.5V11h-.5a.5.5 0 0 1-.468-.325z'/></svg>
<div style='position:absolute;left:399px;top:1541.06px;width:2026px;height:1.2000000000000455px;box-sizing:border-box;background:#dee2e6'></div>
<div style='position:absolute;left:411.25px;top:1485.68px;width:20.5px;height:20.700000000000045px;box-sizing:border-box;border:1px solid #dee2e6;border-radius:5px;background:#fff'></div>
<svg style='position:absolute;left:458.75px;top:1487.68px;width:21.25px;height:18.799999999999955px;' viewBox='0 1 16 14' fill='#ffc107' preserveAspectRatio='none'><path fill-rule='evenodd' d='M8.982 1.566a1.13 1.13 0 0 0-1.96 0L.165 13.233c-.457.778.091 1.767.98 1.767h13.713c.889 0 1.438-.99.98-1.767L8.982 1.566zM8 5c.535 0 .954.462.9.995l-.35 3.507a.552.552 0 0 1-1.1 0L7.1 5.995A.905.905 0 0 1 8 5zm.002 6a1 1 0 1 1 0 2 1 1 0 0 1 0-2z'/></svg>
<div style='position:absolute;left:700.3px;top:1483.58px;width:80.5px;height:28.700000000000045px;box-sizing:border-box;border:1px solid #dee2e6;border-radius:7px;background:#f8f9fa'></div>
<div style='position:absolute;left:856.8px;top:1479.38px;width:80.20000000000005px;height:34.0px;box-sizing:border-box;background:#cfe2ff;border-radius:17px'></div>
<svg style='position:absolute;left:872.9px;top:1490.78px;width:13.200000000000045px;height:12.700000000000045px;' viewBox='2 2 12 12' fill='#052c65' preserveAspectRatio='none'><path fill-rule='evenodd' d='M8 8a3 3 0 1 0 0-6 3 3 0 0 0 0 6Zm2-3a2 2 0 1 1-4 0 2 2 0 0 1 4 0Zm4 8c0 1-1 1-1 1H3s-1 0-1-1 1-4 6-4 6 3 6 4Zm-1-.004c-.001-.246-.154-.986-.832-1.664C11.516 10.68 10.289 10 8 10c-2.29 0-3.516.68-4.168 1.332-.678.678-.83 1.418-.832 1.664h10Z'/></svg>
<div style='position:absolute;left:1493.75px;top:1474.48px;width:123.0px;height:43.75px;box-sizing:border-box;border:1px solid #dee2e6;border-radius:7px;background:#e9ecef'></div>
<div style='position:absolute;left:2045.3px;top:1473.68px;width:134.20000000000005px;height:45.59999999999991px;box-sizing:border-box;border:1px solid #dee2e6;border-radius:7px;background:#fff'></div>
<svg style='position:absolute;left:2140.5px;top:1491.28px;width:17.0px;height:10.400000000000091px' viewBox='0 0 16 9' preserveAspectRatio='none'><path d='M1.2 1.2 8 7.8 14.8 1.2' fill='none' stroke='#343a40' stroke-width='2.2' stroke-linecap='round' stroke-linejoin='round' vector-effect='non-scaling-stroke'/></svg>
<div style='position:absolute;left:2240px;top:1483.48px;width:41.69999999999982px;height:21.0px;box-sizing:border-box;border:1px solid #dee2e6;border-radius:11px;background:#fff'></div>
<div style='position:absolute;left:2243.2px;top:1486.78px;width:14.3px;height:14.3px;border-radius:50%;background:#bfbfbf'></div>
<div style='position:absolute;left:2350px;top:1473.68px;width:46.69999999999982px;height:45.59999999999991px;box-sizing:border-box;border:1.5px solid #6c757d;border-radius:7px;background:#fff'></div>
<svg style='position:absolute;left:2362.5px;top:1486.48px;width:21.5px;height:21.0px;' viewBox='0 0 16 16' fill='#6c757d' preserveAspectRatio='none'><path fill-rule='evenodd' d='M12.146.146a.5.5 0 0 1 .708 0l3 3a.5.5 0 0 1 0 .708l-10 10a.5.5 0 0 1-.168.11l-5 2a.5.5 0 0 1-.65-.65l2-5a.5.5 0 0 1 .11-.168l10-10zM11.207 2.5 13.5 4.793 14.793 3.5 12.5 1.207 11.207 2.5zm1.586 3L10.5 3.207 4 9.707V10h.5a.5.5 0 0 1 .5.5v.5h.5a.5.5 0 0 1 .5.5v.5h.293l6.5-6.5zm-9.761 5.175-.106.106-1.528 3.821 3.821-1.528.106-.106A.5.5 0 0 1 5 12.5V12h-.5a.5.5 0 0 1-.5-.5V11h-.5a.5.5 0 0 1-.468-.325z'/></svg>
<div style='position:absolute;left:399px;top:1632.1399999999999px;width:2026px;height:1.2000000000000455px;box-sizing:border-box;background:#dee2e6'></div>
<div style='position:absolute;left:411.25px;top:1576.76px;width:20.5px;height:20.700000000000045px;box-sizing:border-box;border:1px solid #dee2e6;border-radius:5px;background:#fff'></div>
<svg style='position:absolute;left:458.75px;top:1578.76px;width:21.25px;height:18.799999999999955px;' viewBox='0 1 16 14' fill='#ffc107' preserveAspectRatio='none'><path fill-rule='evenodd' d='M8.982 1.566a1.13 1.13 0 0 0-1.96 0L.165 13.233c-.457.778.091 1.767.98 1.767h13.713c.889 0 1.438-.99.98-1.767L8.982 1.566zM8 5c.535 0 .954.462.9.995l-.35 3.507a.552.552 0 0 1-1.1 0L7.1 5.995A.905.905 0 0 1 8 5zm.002 6a1 1 0 1 1 0 2 1 1 0 0 1 0-2z'/></svg>
<div style='position:absolute;left:700.3px;top:1574.6599999999999px;width:80.5px;height:28.700000000000045px;box-sizing:border-box;border:1px solid #dee2e6;border-radius:7px;background:#f8f9fa'></div>
<div style='position:absolute;left:856.8px;top:1570.46px;width:80.20000000000005px;height:34.0px;box-sizing:border-box;background:#cfe2ff;border-radius:17px'></div>
<svg style='position:absolute;left:872.9px;top:1581.86px;width:13.200000000000045px;height:12.700000000000045px;' viewBox='2 2 12 12' fill='#052c65' preserveAspectRatio='none'><path fill-rule='evenodd' d='M8 8a3 3 0 1 0 0-6 3 3 0 0 0 0 6Zm2-3a2 2 0 1 1-4 0 2 2 0 0 1 4 0Zm4 8c0 1-1 1-1 1H3s-1 0-1-1 1-4 6-4 6 3 6 4Zm-1-.004c-.001-.246-.154-.986-.832-1.664C11.516 10.68 10.289 10 8 10c-2.29 0-3.516.68-4.168 1.332-.678.678-.83 1.418-.832 1.664h10Z'/></svg>
<div style='position:absolute;left:1493.75px;top:1565.56px;width:123.0px;height:43.75px;box-sizing:border-box;border:1px solid #dee2e6;border-radius:7px;background:#e9ecef'></div>
<div style='position:absolute;left:2045.3px;top:1564.76px;width:134.20000000000005px;height:45.59999999999991px;box-sizing:border-box;border:1px solid #dee2e6;border-radius:7px;background:#fff'></div>
<svg style='position:absolute;left:2140.5px;top:1582.36px;width:17.0px;height:10.400000000000091px' viewBox='0 0 16 9' preserveAspectRatio='none'><path d='M1.2 1.2 8 7.8 14.8 1.2' fill='none' stroke='#343a40' stroke-width='2.2' stroke-linecap='round' stroke-linejoin='round' vector-effect='non-scaling-stroke'/></svg>
<div style='position:absolute;left:2240px;top:1574.56px;width:41.69999999999982px;height:21.0px;box-sizing:border-box;border:1px solid #dee2e6;border-radius:11px;background:#fff'></div>
<div style='position:absolute;left:2243.2px;top:1577.86px;width:14.3px;height:14.3px;border-radius:50%;background:#bfbfbf'></div>
<div style='position:absolute;left:2350px;top:1564.76px;width:46.69999999999982px;height:45.59999999999991px;box-sizing:border-box;border:1.5px solid #6c757d;border-radius:7px;background:#fff'></div>
<svg style='position:absolute;left:2362.5px;top:1577.56px;width:21.5px;height:21.0px;' viewBox='0 0 16 16' fill='#6c757d' preserveAspectRatio='none'><path fill-rule='evenodd' d='M12.146.146a.5.5 0 0 1 .708 0l3 3a.5.5 0 0 1 0 .708l-10 10a.5.5 0 0 1-.168.11l-5 2a.5.5 0 0 1-.65-.65l2-5a.5.5 0 0 1 .11-.168l10-10zM11.207 2.5 13.5 4.793 14.793 3.5 12.5 1.207 11.207 2.5zm1.586 3L10.5 3.207 4 9.707V10h.5a.5.5 0 0 1 .5.5v.5h.5a.5.5 0 0 1 .5.5v.5h.293l6.5-6.5zm-9.761 5.175-.106.106-1.528 3.821 3.821-1.528.106-.106A.5.5 0 0 1 5 12.5V12h-.5a.5.5 0 0 1-.5-.5V11h-.5a.5.5 0 0 1-.468-.325z'/></svg>
<div style='position:absolute;left:399px;top:1723.2199999999998px;width:2026px;height:1.2000000000000455px;box-sizing:border-box;background:#dee2e6'></div>
<div style='position:absolute;left:411.25px;top:1667.84px;width:20.5px;height:20.700000000000045px;box-sizing:border-box;border:1px solid #dee2e6;border-radius:5px;background:#fff'></div>
<svg style='position:absolute;left:458.75px;top:1669.84px;width:21.25px;height:18.799999999999955px;' viewBox='0 1 16 14' fill='#ffc107' preserveAspectRatio='none'><path fill-rule='evenodd' d='M8.982 1.566a1.13 1.13 0 0 0-1.96 0L.165 13.233c-.457.778.091 1.767.98 1.767h13.713c.889 0 1.438-.99.98-1.767L8.982 1.566zM8 5c.535 0 .954.462.9.995l-.35 3.507a.552.552 0 0 1-1.1 0L7.1 5.995A.905.905 0 0 1 8 5zm.002 6a1 1 0 1 1 0 2 1 1 0 0 1 0-2z'/></svg>
<div style='position:absolute;left:700.3px;top:1665.7399999999998px;width:80.5px;height:28.700000000000045px;box-sizing:border-box;border:1px solid #dee2e6;border-radius:7px;background:#f8f9fa'></div>
<div style='position:absolute;left:856.8px;top:1661.54px;width:80.20000000000005px;height:34.0px;box-sizing:border-box;background:#cfe2ff;border-radius:17px'></div>
<svg style='position:absolute;left:872.9px;top:1672.9399999999998px;width:13.200000000000045px;height:12.700000000000045px;' viewBox='2 2 12 12' fill='#052c65' preserveAspectRatio='none'><path fill-rule='evenodd' d='M8 8a3 3 0 1 0 0-6 3 3 0 0 0 0 6Zm2-3a2 2 0 1 1-4 0 2 2 0 0 1 4 0Zm4 8c0 1-1 1-1 1H3s-1 0-1-1 1-4 6-4 6 3 6 4Zm-1-.004c-.001-.246-.154-.986-.832-1.664C11.516 10.68 10.289 10 8 10c-2.29 0-3.516.68-4.168 1.332-.678.678-.83 1.418-.832 1.664h10Z'/></svg>
<div style='position:absolute;left:1493.75px;top:1656.6399999999999px;width:123.0px;height:43.75px;box-sizing:border-box;border:1px solid #dee2e6;border-radius:7px;background:#e9ecef'></div>
<div style='position:absolute;left:2045.3px;top:1655.84px;width:134.20000000000005px;height:45.59999999999991px;box-sizing:border-box;border:1px solid #dee2e6;border-radius:7px;background:#fff'></div>
<svg style='position:absolute;left:2140.5px;top:1673.4399999999998px;width:17.0px;height:10.400000000000091px' viewBox='0 0 16 9' preserveAspectRatio='none'><path d='M1.2 1.2 8 7.8 14.8 1.2' fill='none' stroke='#343a40' stroke-width='2.2' stroke-linecap='round' stroke-linejoin='round' vector-effect='non-scaling-stroke'/></svg>
<div style='position:absolute;left:2240px;top:1665.6399999999999px;width:41.69999999999982px;height:21.0px;box-sizing:border-box;border:1px solid #dee2e6;border-radius:11px;background:#fff'></div>
<div style='position:absolute;left:2243.2px;top:1668.9399999999998px;width:14.3px;height:14.3px;border-radius:50%;background:#bfbfbf'></div>
<div style='position:absolute;left:2350px;top:1655.84px;width:46.69999999999982px;height:45.59999999999991px;box-sizing:border-box;border:1.5px solid #6c757d;border-radius:7px;background:#fff'></div>
<svg style='position:absolute;left:2362.5px;top:1668.6399999999999px;width:21.5px;height:21.0px;' viewBox='0 0 16 16' fill='#6c757d' preserveAspectRatio='none'><path fill-rule='evenodd' d='M12.146.146a.5.5 0 0 1 .708 0l3 3a.5.5 0 0 1 0 .708l-10 10a.5.5 0 0 1-.168.11l-5 2a.5.5 0 0 1-.65-.65l2-5a.5.5 0 0 1 .11-.168l10-10zM11.207 2.5 13.5 4.793 14.793 3.5 12.5 1.207 11.207 2.5zm1.586 3L10.5 3.207 4 9.707V10h.5a.5.5 0 0 1 .5.5v.5h.5a.5.5 0 0 1 .5.5v.5h.293l6.5-6.5zm-9.761 5.175-.106.106-1.528 3.821 3.821-1.528.106-.106A.5.5 0 0 1 5 12.5V12h-.5a.5.5 0 0 1-.5-.5V11h-.5a.5.5 0 0 1-.468-.325z'/></svg>
<div style='position:absolute;left:399px;top:1814.3px;width:2026px;height:1.2000000000000455px;box-sizing:border-box;background:#dee2e6'></div>
<div style='position:absolute;left:411.25px;top:1758.92px;width:20.5px;height:20.700000000000045px;box-sizing:border-box;border:1px solid #dee2e6;border-radius:5px;background:#fff'></div>
<svg style='position:absolute;left:458.75px;top:1760.92px;width:21.25px;height:18.799999999999955px;' viewBox='0 1 16 14' fill='#ffc107' preserveAspectRatio='none'><path fill-rule='evenodd' d='M8.982 1.566a1.13 1.13 0 0 0-1.96 0L.165 13.233c-.457.778.091 1.767.98 1.767h13.713c.889 0 1.438-.99.98-1.767L8.982 1.566zM8 5c.535 0 .954.462.9.995l-.35 3.507a.552.552 0 0 1-1.1 0L7.1 5.995A.905.905 0 0 1 8 5zm.002 6a1 1 0 1 1 0 2 1 1 0 0 1 0-2z'/></svg>
<div style='position:absolute;left:700.3px;top:1756.82px;width:80.5px;height:28.700000000000045px;box-sizing:border-box;border:1px solid #dee2e6;border-radius:7px;background:#f8f9fa'></div>
<div style='position:absolute;left:856.8px;top:1752.6200000000001px;width:80.20000000000005px;height:34.0px;box-sizing:border-box;background:#cfe2ff;border-radius:17px'></div>
<svg style='position:absolute;left:872.9px;top:1764.02px;width:13.200000000000045px;height:12.700000000000045px;' viewBox='2 2 12 12' fill='#052c65' preserveAspectRatio='none'><path fill-rule='evenodd' d='M8 8a3 3 0 1 0 0-6 3 3 0 0 0 0 6Zm2-3a2 2 0 1 1-4 0 2 2 0 0 1 4 0Zm4 8c0 1-1 1-1 1H3s-1 0-1-1 1-4 6-4 6 3 6 4Zm-1-.004c-.001-.246-.154-.986-.832-1.664C11.516 10.68 10.289 10 8 10c-2.29 0-3.516.68-4.168 1.332-.678.678-.83 1.418-.832 1.664h10Z'/></svg>
<div style='position:absolute;left:1493.75px;top:1747.72px;width:123.0px;height:43.75px;box-sizing:border-box;border:1px solid #dee2e6;border-radius:7px;background:#e9ecef'></div>
<div style='position:absolute;left:2045.3px;top:1746.92px;width:134.20000000000005px;height:45.59999999999991px;box-sizing:border-box;border:1px solid #dee2e6;border-radius:7px;background:#fff'></div>
<svg style='position:absolute;left:2140.5px;top:1764.52px;width:17.0px;height:10.400000000000091px' viewBox='0 0 16 9' preserveAspectRatio='none'><path d='M1.2 1.2 8 7.8 14.8 1.2' fill='none' stroke='#343a40' stroke-width='2.2' stroke-linecap='round' stroke-linejoin='round' vector-effect='non-scaling-stroke'/></svg>
<div style='position:absolute;left:2240px;top:1756.72px;width:41.69999999999982px;height:21.0px;box-sizing:border-box;border:1px solid #dee2e6;border-radius:11px;background:#fff'></div>
<div style='position:absolute;left:2243.2px;top:1760.02px;width:14.3px;height:14.3px;border-radius:50%;background:#bfbfbf'></div>
<div style='position:absolute;left:2350px;top:1746.92px;width:46.69999999999982px;height:45.59999999999991px;box-sizing:border-box;border:1.5px solid #6c757d;border-radius:7px;background:#fff'></div>
<svg style='position:absolute;left:2362.5px;top:1759.72px;width:21.5px;height:21.0px;' viewBox='0 0 16 16' fill='#6c757d' preserveAspectRatio='none'><path fill-rule='evenodd' d='M12.146.146a.5.5 0 0 1 .708 0l3 3a.5.5 0 0 1 0 .708l-10 10a.5.5 0 0 1-.168.11l-5 2a.5.5 0 0 1-.65-.65l2-5a.5.5 0 0 1 .11-.168l10-10zM11.207 2.5 13.5 4.793 14.793 3.5 12.5 1.207 11.207 2.5zm1.586 3L10.5 3.207 4 9.707V10h.5a.5.5 0 0 1 .5.5v.5h.5a.5.5 0 0 1 .5.5v.5h.293l6.5-6.5zm-9.761 5.175-.106.106-1.528 3.821 3.821-1.528.106-.106A.5.5 0 0 1 5 12.5V12h-.5a.5.5 0 0 1-.5-.5V11h-.5a.5.5 0 0 1-.468-.325z'/></svg>
<div style='position:absolute;left:399px;top:1905.3799999999999px;width:2026px;height:1.2000000000000455px;box-sizing:border-box;background:#dee2e6'></div>
<div style='position:absolute;left:411.25px;top:1850.0px;width:20.5px;height:20.700000000000045px;box-sizing:border-box;border:1px solid #dee2e6;border-radius:5px;background:#fff'></div>
<svg style='position:absolute;left:458.75px;top:1852.0px;width:21.25px;height:18.799999999999955px;' viewBox='0 1 16 14' fill='#ffc107' preserveAspectRatio='none'><path fill-rule='evenodd' d='M8.982 1.566a1.13 1.13 0 0 0-1.96 0L.165 13.233c-.457.778.091 1.767.98 1.767h13.713c.889 0 1.438-.99.98-1.767L8.982 1.566zM8 5c.535 0 .954.462.9.995l-.35 3.507a.552.552 0 0 1-1.1 0L7.1 5.995A.905.905 0 0 1 8 5zm.002 6a1 1 0 1 1 0 2 1 1 0 0 1 0-2z'/></svg>
<div style='position:absolute;left:700.3px;top:1847.8999999999999px;width:80.5px;height:28.700000000000045px;box-sizing:border-box;border:1px solid #dee2e6;border-radius:7px;background:#f8f9fa'></div>
<div style='position:absolute;left:856.8px;top:1843.7px;width:80.20000000000005px;height:34.0px;box-sizing:border-box;background:#cfe2ff;border-radius:17px'></div>
<svg style='position:absolute;left:872.9px;top:1855.1px;width:13.200000000000045px;height:12.700000000000045px;' viewBox='2 2 12 12' fill='#052c65' preserveAspectRatio='none'><path fill-rule='evenodd' d='M8 8a3 3 0 1 0 0-6 3 3 0 0 0 0 6Zm2-3a2 2 0 1 1-4 0 2 2 0 0 1 4 0Zm4 8c0 1-1 1-1 1H3s-1 0-1-1 1-4 6-4 6 3 6 4Zm-1-.004c-.001-.246-.154-.986-.832-1.664C11.516 10.68 10.289 10 8 10c-2.29 0-3.516.68-4.168 1.332-.678.678-.83 1.418-.832 1.664h10Z'/></svg>
<div style='position:absolute;left:1493.75px;top:1838.8px;width:123.0px;height:43.75px;box-sizing:border-box;border:1px solid #dee2e6;border-radius:7px;background:#e9ecef'></div>
<div style='position:absolute;left:2045.3px;top:1838.0px;width:134.20000000000005px;height:45.59999999999991px;box-sizing:border-box;border:1px solid #dee2e6;border-radius:7px;background:#fff'></div>
<svg style='position:absolute;left:2140.5px;top:1855.6px;width:17.0px;height:10.400000000000091px' viewBox='0 0 16 9' preserveAspectRatio='none'><path d='M1.2 1.2 8 7.8 14.8 1.2' fill='none' stroke='#343a40' stroke-width='2.2' stroke-linecap='round' stroke-linejoin='round' vector-effect='non-scaling-stroke'/></svg>
<div style='position:absolute;left:2240px;top:1847.8px;width:41.69999999999982px;height:21.0px;box-sizing:border-box;border:1px solid #dee2e6;border-radius:11px;background:#fff'></div>
<div style='position:absolute;left:2243.2px;top:1851.1px;width:14.3px;height:14.3px;border-radius:50%;background:#bfbfbf'></div>
<div style='position:absolute;left:2350px;top:1838.0px;width:46.69999999999982px;height:45.59999999999991px;box-sizing:border-box;border:1.5px solid #6c757d;border-radius:7px;background:#fff'></div>
<svg style='position:absolute;left:2362.5px;top:1850.8px;width:21.5px;height:21.0px;' viewBox='0 0 16 16' fill='#6c757d' preserveAspectRatio='none'><path fill-rule='evenodd' d='M12.146.146a.5.5 0 0 1 .708 0l3 3a.5.5 0 0 1 0 .708l-10 10a.5.5 0 0 1-.168.11l-5 2a.5.5 0 0 1-.65-.65l2-5a.5.5 0 0 1 .11-.168l10-10zM11.207 2.5 13.5 4.793 14.793 3.5 12.5 1.207 11.207 2.5zm1.586 3L10.5 3.207 4 9.707V10h.5a.5.5 0 0 1 .5.5v.5h.5a.5.5 0 0 1 .5.5v.5h.293l6.5-6.5zm-9.761 5.175-.106.106-1.528 3.821 3.821-1.528.106-.106A.5.5 0 0 1 5 12.5V12h-.5a.5.5 0 0 1-.5-.5V11h-.5a.5.5 0 0 1-.468-.325z'/></svg>
<div style='position:absolute;left:1315.5500000000002px;top:957.0px;width:121.34999999999991px;height:25.799999999999955px;box-sizing:border-box;background:#fff3cd;border:1px solid #ffe69c;border-radius:10px'></div>
<div style='position:absolute;left:1193.7500000000002px;top:957.0px;width:110.59999999999991px;height:25.799999999999955px;box-sizing:border-box;background:#d1e7dd;border:1px solid #a3cfbb;border-radius:10px'></div>
<div style='position:absolute;left:1071.9500000000003px;top:957.0px;width:110.59999999999991px;height:25.799999999999955px;box-sizing:border-box;background:#cff4fc;border:1px solid #9eeaf9;border-radius:10px'></div>
<div style='position:absolute;left:1315.5500000000002px;top:1048.08px;width:121.34999999999991px;height:25.800000000000182px;box-sizing:border-box;background:#fff3cd;border:1px solid #ffe69c;border-radius:10px'></div>
<div style='position:absolute;left:1193.7500000000002px;top:1048.08px;width:110.59999999999991px;height:25.800000000000182px;box-sizing:border-box;background:#cff4fc;border:1px solid #9eeaf9;border-radius:10px'></div>
<div style='position:absolute;left:1315.5500000000002px;top:1139.16px;width:121.34999999999991px;height:25.799999999999955px;box-sizing:border-box;background:#fff3cd;border:1px solid #ffe69c;border-radius:10px'></div>
<div style='position:absolute;left:1193.7500000000002px;top:1139.16px;width:110.59999999999991px;height:25.799999999999955px;box-sizing:border-box;background:#cff4fc;border:1px solid #9eeaf9;border-radius:10px'></div>
<div style='position:absolute;left:1315.5500000000002px;top:1230.24px;width:121.34999999999991px;height:25.799999999999955px;box-sizing:border-box;background:#fff3cd;border:1px solid #ffe69c;border-radius:10px'></div>
<div style='position:absolute;left:1193.7500000000002px;top:1230.24px;width:110.59999999999991px;height:25.799999999999955px;box-sizing:border-box;background:#cff4fc;border:1px solid #9eeaf9;border-radius:10px'></div>
<div style='position:absolute;left:1315.5500000000002px;top:1321.32px;width:121.34999999999991px;height:25.799999999999955px;box-sizing:border-box;background:#fff3cd;border:1px solid #ffe69c;border-radius:10px'></div>
<div style='position:absolute;left:1193.7500000000002px;top:1321.32px;width:110.59999999999991px;height:25.799999999999955px;box-sizing:border-box;background:#cff4fc;border:1px solid #9eeaf9;border-radius:10px'></div>
<div style='position:absolute;left:1315.5500000000002px;top:1412.4px;width:121.34999999999991px;height:25.799999999999955px;box-sizing:border-box;background:#fff3cd;border:1px solid #ffe69c;border-radius:10px'></div>
<div style='position:absolute;left:1193.7500000000002px;top:1412.4px;width:110.59999999999991px;height:25.799999999999955px;box-sizing:border-box;background:#cff4fc;border:1px solid #9eeaf9;border-radius:10px'></div>
<div style='position:absolute;left:1315.5500000000002px;top:1503.48px;width:121.34999999999991px;height:25.799999999999955px;box-sizing:border-box;background:#fff3cd;border:1px solid #ffe69c;border-radius:10px'></div>
<div style='position:absolute;left:1193.7500000000002px;top:1503.48px;width:110.59999999999991px;height:25.799999999999955px;box-sizing:border-box;background:#cff4fc;border:1px solid #9eeaf9;border-radius:10px'></div>
<div style='position:absolute;left:1315.5500000000002px;top:1594.56px;width:121.34999999999991px;height:25.799999999999955px;box-sizing:border-box;background:#fff3cd;border:1px solid #ffe69c;border-radius:10px'></div>
<div style='position:absolute;left:1193.7500000000002px;top:1594.56px;width:110.59999999999991px;height:25.799999999999955px;box-sizing:border-box;background:#cff4fc;border:1px solid #9eeaf9;border-radius:10px'></div>
<div style='position:absolute;left:1315.5500000000002px;top:1685.6399999999999px;width:121.34999999999991px;height:25.799999999999955px;box-sizing:border-box;background:#fff3cd;border:1px solid #ffe69c;border-radius:10px'></div>
<div style='position:absolute;left:1193.7500000000002px;top:1685.6399999999999px;width:110.59999999999991px;height:25.799999999999955px;box-sizing:border-box;background:#cff4fc;border:1px solid #9eeaf9;border-radius:10px'></div>
<div style='position:absolute;left:1315.5500000000002px;top:1776.72px;width:121.34999999999991px;height:25.799999999999955px;box-sizing:border-box;background:#fff3cd;border:1px solid #ffe69c;border-radius:10px'></div>
<div style='position:absolute;left:1193.7500000000002px;top:1776.72px;width:110.59999999999991px;height:25.799999999999955px;box-sizing:border-box;background:#cff4fc;border:1px solid #9eeaf9;border-radius:10px'></div>
<div style='position:absolute;left:1315.5500000000002px;top:1867.8px;width:121.34999999999991px;height:25.799999999999955px;box-sizing:border-box;background:#fff3cd;border:1px solid #ffe69c;border-radius:10px'></div>
<div style='position:absolute;left:1193.7500000000002px;top:1867.8px;width:110.59999999999991px;height:25.799999999999955px;box-sizing:border-box;background:#cff4fc;border:1px solid #9eeaf9;border-radius:10px'></div>
<span style='position:absolute;left:104.00px;top:33.00px;font-size:22.05px;line-height:1;white-space:nowrap;transform:scaleX(0.9419);transform-origin:0 0;font-weight:700;color:#fff'>자금집행</span>
<span style='position:absolute;left:102.91px;top:67.00px;font-size:14.96px;line-height:1;white-space:nowrap;transform:scaleX(1.0919);transform-origin:0 0;color:#a9afbd'>Purple IO</span>
<span style='position:absolute;left:32.50px;top:143.25px;font-size:14.24px;line-height:1;white-space:nowrap;transform:scaleX(1.0583);transform-origin:0 0;font-weight:700;color:#6b7389'>메인 메뉴</span>
<span style='position:absolute;left:73.65px;top:186.50px;font-size:18.41px;line-height:1;white-space:nowrap;transform:scaleX(1.0471);transform-origin:0 0;color:#c3c8d4'>대시보드</span>
<span style='position:absolute;left:73.71px;top:251.30px;font-size:19.24px;line-height:1;white-space:nowrap;transform:scaleX(0.994);transform-origin:0 0;color:#c3c8d4'>위하고 업로드</span>
<span style='position:absolute;left:30.89px;top:329.25px;font-size:14.24px;line-height:1;white-space:nowrap;transform:scaleX(1.114);transform-origin:0 0;font-weight:700;color:#6b7389'>집행 관리</span>
<span style='position:absolute;left:72.86px;top:373.00px;font-size:20.51px;line-height:1;white-space:nowrap;transform:scaleX(0.9189);transform-origin:0 0;color:#c3c8d4'>직원 계좌 관리</span>
<span style='position:absolute;left:72.78px;top:439.60px;font-size:19.8px;line-height:1;white-space:nowrap;transform:scaleX(0.9608);transform-origin:0 0;color:#c3c8d4'>법인카드 관리</span>
<span style='position:absolute;left:73.80px;top:505.00px;font-size:20.51px;line-height:1;white-space:nowrap;transform:scaleX(0.9047);transform-origin:0 0;color:#c3c8d4'>거래처 관리</span>
<span style='position:absolute;left:73.70px;top:571.25px;font-size:19.45px;line-height:1;white-space:nowrap;color:#c3c8d4'>일괄 가져오기</span>
<span style='position:absolute;left:32.00px;top:650.75px;font-size:13.04px;line-height:1;white-space:nowrap;transform:scaleX(1.1316);transform-origin:0 0;font-weight:700;color:#6b7389'>시스템</span>
<span style='position:absolute;left:73.80px;top:692.00px;font-size:20.51px;line-height:1;white-space:nowrap;transform:scaleX(0.9038);transform-origin:0 0;color:#c3c8d4'>환경설정</span>
<span style='position:absolute;left:29.00px;top:1868.75px;font-size:13.83px;line-height:1;white-space:nowrap;transform:scaleX(1.1168);transform-origin:0 0;color:#1a1d2b'>v1.0 © 2026 Purple IO</span>
<span style='position:absolute;left:397.75px;top:24.85px;font-size:29.06px;line-height:1;white-space:nowrap;transform:scaleX(0.9517);transform-origin:0 0;font-weight:700;color:#212529'>자금집행 검토</span>
<span style='position:absolute;left:606.97px;top:30.50px;font-size:22.41px;line-height:1;white-space:nowrap;transform:scaleX(1.0323);transform-origin:0 0;font-weight:700;color:#fff'>승인됨</span>
<span style='position:absolute;left:2074.01px;top:32.25px;font-size:17.43px;line-height:1;white-space:nowrap;transform:scaleX(0.988);transform-origin:0 0;font-weight:700;color:#fff'>승인 완료 — 승인권자</span>
<span style='position:absolute;left:2316.48px;top:31.00px;font-size:19.01px;line-height:1;white-space:nowrap;transform:scaleX(1.0186);transform-origin:0 0;color:#fff'>전체 파일 다운로드</span>
<span style='position:absolute;left:2637.50px;top:32.05px;font-size:17.43px;line-height:1;white-space:nowrap;transform:scaleX(0.96);transform-origin:0 0;font-weight:700;color:#0d6efd'>시스템 정상</span>
<span style='position:absolute;left:2800.78px;top:30.75px;font-size:19.03px;line-height:1;white-space:nowrap;transform:scaleX(1.0162);transform-origin:0 0;color:#6c757d'>집행 관리자</span>
<span style='position:absolute;left:464.78px;top:145.95px;font-size:23.44px;line-height:1;white-space:nowrap;transform:scaleX(0.9611);transform-origin:0 0;color:#664d03'>이 세션은 <b>승인 완료</b> 상태입니다. 편집하려면 관리자에게 문의하세요.</span>
<span style='position:absolute;left:427.68px;top:243.35px;font-size:18.45px;line-height:1;white-space:nowrap;transform:scaleX(0.9224);transform-origin:0 0;color:#6c757d'>집행 일자</span>
<span style='position:absolute;left:427.63px;top:282.00px;font-size:36.0px;line-height:1;white-space:nowrap;transform:scaleX(0.9694);transform-origin:0 0;font-weight:700;color:#0d6efd'>2026-03-04</span>
<span style='position:absolute;left:963.70px;top:243.65px;font-size:18.35px;line-height:1;white-space:nowrap;transform:scaleX(0.9509);transform-origin:0 0;color:#6c757d'>당일 집행 합계</span>
<span style='position:absolute;left:939.60px;top:284.65px;font-size:30.97px;line-height:1;white-space:nowrap;transform:scaleX(0.88);transform-origin:0 0;font-weight:700;color:#0d6efd'>₩</span>
<span style='position:absolute;left:939.88px;top:335.25px;font-size:18.31px;line-height:1;white-space:nowrap;transform:scaleX(1.1239);transform-origin:0 0;color:#495057'>178건</span>
<span style='position:absolute;left:1477.81px;top:244.50px;font-size:17.78px;line-height:1;white-space:nowrap;transform:scaleX(0.9413);transform-origin:0 0;color:#6c757d'>집행 제외 합계</span>
<span style='position:absolute;left:1453.00px;top:284.25px;font-size:31.14px;line-height:1;white-space:nowrap;transform:scaleX(0.8833);transform-origin:0 0;font-weight:700;color:#dc3545'>₩</span>
<span style='position:absolute;left:1453.44px;top:334.50px;font-size:19.29px;line-height:1;white-space:nowrap;transform:scaleX(1.0556);transform-origin:0 0;color:#495057'>5건</span>
<span style='position:absolute;left:1966.57px;top:244.50px;font-size:17.78px;line-height:1;white-space:nowrap;transform:scaleX(0.9333);transform-origin:0 0;color:#6c757d'>검토 필요</span>
<span style='position:absolute;left:1966.43px;top:282.88px;font-size:31.31px;line-height:1;white-space:nowrap;transform:scaleX(1.0685);transform-origin:0 0;font-weight:700;color:#dc3545'>60건</span>
<span style='position:absolute;left:451.77px;top:435.55px;font-size:18.45px;line-height:1;white-space:nowrap;transform:scaleX(0.9286);transform-origin:0 0;color:#6c757d'>이자비용</span>
<span style='position:absolute;left:441.00px;top:481.20px;font-size:17.96px;line-height:1;white-space:nowrap;transform:scaleX(0.9176);transform-origin:0 0;color:#212529'>₩</span>
<span style='position:absolute;left:808.92px;top:479.25px;font-size:18.83px;line-height:1;white-space:nowrap;transform:scaleX(1.08);transform-origin:0 0;font-family:"Liberation Mono", monospace;color:#212529'>0</span>
<span style='position:absolute;left:427.07px;top:522.60px;font-size:21.38px;line-height:1;white-space:nowrap;transform:scaleX(0.9311);transform-origin:0 0;color:#6c757d'>승인권자 화면 집행 합계에 반영</span>
<span style='position:absolute;left:453.03px;top:621.25px;font-size:19.45px;line-height:1;white-space:nowrap;transform:scaleX(0.9689);transform-origin:0 0;font-weight:700;color:#212529'>법인카드-개인기명 46건</span>
<span style='position:absolute;left:436.02px;top:718.35px;font-size:19.93px;line-height:1;white-space:nowrap;transform:scaleX(0.9811);transform-origin:0 0;color:#6c757d'>전체</span>
<span style='position:absolute;left:525.61px;top:717.15px;font-size:21.16px;line-height:1;white-space:nowrap;transform:scaleX(0.9471);transform-origin:0 0;color:#fff'>당일 집행</span>
<span style='position:absolute;left:660.13px;top:718.00px;font-size:20.51px;line-height:1;white-space:nowrap;transform:scaleX(0.9329);transform-origin:0 0;color:#dc3545'>집행 제외</span>
<span style='position:absolute;left:781.02px;top:717.55px;font-size:20.73px;line-height:1;white-space:nowrap;transform:scaleX(0.9421);transform-origin:0 0;color:#fff'>직원</span>
<span style='position:absolute;left:907.63px;top:717.55px;font-size:20.73px;line-height:1;white-space:nowrap;transform:scaleX(0.9338);transform-origin:0 0;color:#6c757d'>아코디언</span>
<span style='position:absolute;left:1050.76px;top:717.55px;font-size:20.73px;line-height:1;white-space:nowrap;transform:scaleX(0.9395);transform-origin:0 0;color:#0d6efd'>상세 필터</span>
<span style='position:absolute;left:1156.27px;top:721.20px;font-size:14.82px;line-height:1;white-space:nowrap;transform:scaleX(0.9286);transform-origin:0 0;font-weight:700;color:#fff'>1</span>
<span style='position:absolute;left:2144.00px;top:717.75px;font-size:19.45px;line-height:1;white-space:nowrap;color:#6c757d'>거래처명 검색...</span>
<span style='position:absolute;left:436.54px;top:788.60px;font-size:20.03px;line-height:1;white-space:nowrap;transform:scaleX(0.9615);transform-origin:0 0;font-weight:700;color:#4a5bd9'>미지급금</span>
<span style='position:absolute;left:637.25px;top:789.35px;font-size:19.87px;line-height:1;white-space:nowrap;transform:scaleX(0.9738);transform-origin:0 0;color:#212529'>이체방식 전체</span>
<span style='position:absolute;left:838.85px;top:789.35px;font-size:19.87px;line-height:1;white-space:nowrap;transform:scaleX(0.977);transform-origin:0 0;color:#212529'>정기여부 전체</span>
<span style='position:absolute;left:1042.03px;top:789.35px;font-size:19.87px;line-height:1;white-space:nowrap;transform:scaleX(0.9723);transform-origin:0 0;color:#212529'>은행 전체</span>
<span style='position:absolute;left:1221.84px;top:789.35px;font-size:19.87px;line-height:1;white-space:nowrap;transform:scaleX(0.9564);transform-origin:0 0;color:#6c757d'>계좌번호 검색...</span>
<span style='position:absolute;left:1501.05px;top:789.35px;font-size:19.87px;line-height:1;white-space:nowrap;transform:scaleX(0.9542);transform-origin:0 0;color:#6c757d'>초기화</span>
<span style='position:absolute;left:458.29px;top:865.27px;font-size:20.73px;line-height:1;white-space:nowrap;transform:scaleX(0.9576);transform-origin:0 0;font-weight:700;color:#000'>거래처</span>
<span style='position:absolute;left:700.75px;top:866.27px;font-size:19.9px;line-height:1;white-space:nowrap;transform:scaleX(0.9652);transform-origin:0 0;font-weight:700;color:#000'>계정과목</span>
<span style='position:absolute;left:856.57px;top:865.27px;font-size:20.73px;line-height:1;white-space:nowrap;transform:scaleX(0.9295);transform-origin:0 0;font-weight:700;color:#000'>유형</span>
<span style='position:absolute;left:1371.51px;top:866.27px;font-size:19.9px;line-height:1;white-space:nowrap;transform:scaleX(0.9865);transform-origin:0 0;font-weight:700;color:#000'>잔액</span>
<span style='position:absolute;left:1534.03px;top:866.27px;font-size:19.9px;line-height:1;white-space:nowrap;transform:scaleX(0.9699);transform-origin:0 0;font-weight:700;color:#000'>집행 제외</span>
<span style='position:absolute;left:1715.02px;top:866.27px;font-size:19.9px;line-height:1;white-space:nowrap;transform:scaleX(0.9831);transform-origin:0 0;font-weight:700;color:#000'>집행금액</span>
<span style='position:absolute;left:1842.33px;top:865.27px;font-size:20.73px;line-height:1;white-space:nowrap;transform:scaleX(0.9663);transform-origin:0 0;font-weight:700;color:#000'>은행/계좌</span>
<span style='position:absolute;left:2045.03px;top:866.27px;font-size:19.9px;line-height:1;white-space:nowrap;transform:scaleX(0.974);transform-origin:0 0;font-weight:700;color:#000'>이체방식</span>
<span style='position:absolute;left:2239.02px;top:865.27px;font-size:20.73px;line-height:1;white-space:nowrap;transform:scaleX(0.9816);transform-origin:0 0;font-weight:700;color:#000'>정기</span>
<span style='position:absolute;left:491.56px;top:939.00px;font-size:20.83px;line-height:1;white-space:nowrap;transform:scaleX(0.9375);transform-origin:0 0;font-weight:700;color:#000'>권민정</span>
<span style='position:absolute;left:1325.65px;top:962.90px;font-size:12.4px;line-height:1;white-space:nowrap;transform:scaleX(1.075);transform-origin:0 0;font-weight:700;color:#ffc107'>정산 ₩8,302,060</span>
<span style='position:absolute;left:1203.85px;top:962.90px;font-size:12.4px;line-height:1;white-space:nowrap;transform:scaleX(1.075);transform-origin:0 0;font-weight:700;color:#198754'>운동 ₩150,000</span>
<span style='position:absolute;left:1082.05px;top:962.90px;font-size:12.4px;line-height:1;white-space:nowrap;transform:scaleX(1.075);transform-origin:0 0;font-weight:700;color:#0dcaf0'>통신 ₩100,000</span>
<span style='position:absolute;left:1333.10px;top:923.45px;font-size:18.29px;line-height:1;white-space:nowrap;transform:scaleX(1.0561);transform-origin:0 0;color:#495057'>₩8,552,060</span>
<span style='position:absolute;left:1712.30px;top:941.50px;font-size:17.89px;line-height:1;white-space:nowrap;transform:scaleX(1.1042);transform-origin:0 0;color:#0d6efd'>₩8,552,060</span>
<span style='position:absolute;left:1841.86px;top:925.50px;font-size:16.47px;line-height:1;white-space:nowrap;transform:scaleX(1.1379);transform-origin:0 0;font-weight:700;color:#000'>우리</span>
<span style='position:absolute;left:561.50px;top:942.00px;font-size:18.23px;line-height:1;white-space:nowrap;color:#6c757d'>[000253]</span>
<span style='position:absolute;left:711.52px;top:943.75px;font-size:15.46px;line-height:1;white-space:nowrap;transform:scaleX(0.9759);transform-origin:0 0;font-weight:700;color:#212529'>미지급금</span>
<span style='position:absolute;left:893.04px;top:942.20px;font-size:15.67px;line-height:1;white-space:nowrap;transform:scaleX(0.9567);transform-origin:0 0;font-weight:700;color:#052c65'>직원</span>
<span style='position:absolute;left:1573.90px;top:941.38px;font-size:18.8px;line-height:1;white-space:nowrap;transform:scaleX(1.1);transform-origin:0 0;font-family:"Liberation Mono", monospace;color:#212529'>0</span>
<span style='position:absolute;left:1841.89px;top:954.70px;font-size:19.61px;line-height:1;white-space:nowrap;transform:scaleX(1.113);transform-origin:0 0;color:#495057'>111111111112</span>
<span style='position:absolute;left:2057.25px;top:939.15px;font-size:21.86px;line-height:1;white-space:nowrap;transform:scaleX(0.875);transform-origin:0 0;color:#212529'>다계좌</span>
<span style='position:absolute;left:1325.65px;top:1053.98px;font-size:12.4px;line-height:1;white-space:nowrap;transform:scaleX(1.075);transform-origin:0 0;font-weight:700;color:#ffc107'>정산 ₩7,673,300</span>
<span style='position:absolute;left:1203.85px;top:1053.98px;font-size:12.4px;line-height:1;white-space:nowrap;transform:scaleX(1.075);transform-origin:0 0;font-weight:700;color:#0dcaf0'>통신 ₩100,000</span>
<span style='position:absolute;left:1333.10px;top:1014.53px;font-size:18.29px;line-height:1;white-space:nowrap;transform:scaleX(1.0561);transform-origin:0 0;color:#495057'>₩7,773,300</span>
<span style='position:absolute;left:1712.30px;top:1032.58px;font-size:17.89px;line-height:1;white-space:nowrap;transform:scaleX(1.1042);transform-origin:0 0;color:#0d6efd'>₩7,773,300</span>
<span style='position:absolute;left:1841.86px;top:1016.58px;font-size:16.47px;line-height:1;white-space:nowrap;transform:scaleX(1.1379);transform-origin:0 0;font-weight:700;color:#000'>우리</span>
<span style='position:absolute;left:561.50px;top:1033.08px;font-size:18.23px;line-height:1;white-space:nowrap;color:#6c757d'>[000255]</span>
<span style='position:absolute;left:711.52px;top:1034.83px;font-size:15.46px;line-height:1;white-space:nowrap;transform:scaleX(0.9759);transform-origin:0 0;font-weight:700;color:#212529'>미지급금</span>
<span style='position:absolute;left:893.04px;top:1033.28px;font-size:15.67px;line-height:1;white-space:nowrap;transform:scaleX(0.9567);transform-origin:0 0;font-weight:700;color:#052c65'>직원</span>
<span style='position:absolute;left:1573.90px;top:1032.45px;font-size:18.8px;line-height:1;white-space:nowrap;transform:scaleX(1.1);transform-origin:0 0;font-family:"Liberation Mono", monospace;color:#212529'>0</span>
<span style='position:absolute;left:1841.89px;top:1045.78px;font-size:19.61px;line-height:1;white-space:nowrap;transform:scaleX(1.113);transform-origin:0 0;color:#495057'>111111111112</span>
<span style='position:absolute;left:2057.25px;top:1030.23px;font-size:21.86px;line-height:1;white-space:nowrap;transform:scaleX(0.875);transform-origin:0 0;color:#212529'>다계좌</span>
<span style='position:absolute;left:1325.65px;top:1145.06px;font-size:12.4px;line-height:1;white-space:nowrap;transform:scaleX(1.075);transform-origin:0 0;font-weight:700;color:#ffc107'>정산 ₩7,940,320</span>
<span style='position:absolute;left:1203.85px;top:1145.06px;font-size:12.4px;line-height:1;white-space:nowrap;transform:scaleX(1.075);transform-origin:0 0;font-weight:700;color:#0dcaf0'>통신 ₩100,000</span>
<span style='position:absolute;left:1333.10px;top:1105.61px;font-size:18.29px;line-height:1;white-space:nowrap;transform:scaleX(1.0561);transform-origin:0 0;color:#495057'>₩8,040,320</span>
<span style='position:absolute;left:1712.30px;top:1123.66px;font-size:17.89px;line-height:1;white-space:nowrap;transform:scaleX(1.1042);transform-origin:0 0;color:#0d6efd'>₩8,040,320</span>
<span style='position:absolute;left:1841.86px;top:1107.66px;font-size:16.47px;line-height:1;white-space:nowrap;transform:scaleX(1.1379);transform-origin:0 0;font-weight:700;color:#000'>기업</span>
<span style='position:absolute;left:561.50px;top:1124.16px;font-size:18.23px;line-height:1;white-space:nowrap;color:#6c757d'>[000256]</span>
<span style='position:absolute;left:711.52px;top:1125.91px;font-size:15.46px;line-height:1;white-space:nowrap;transform:scaleX(0.9759);transform-origin:0 0;font-weight:700;color:#212529'>미지급금</span>
<span style='position:absolute;left:893.04px;top:1124.36px;font-size:15.67px;line-height:1;white-space:nowrap;transform:scaleX(0.9567);transform-origin:0 0;font-weight:700;color:#052c65'>직원</span>
<span style='position:absolute;left:1573.90px;top:1123.54px;font-size:18.8px;line-height:1;white-space:nowrap;transform:scaleX(1.1);transform-origin:0 0;font-family:"Liberation Mono", monospace;color:#212529'>0</span>
<span style='position:absolute;left:1841.89px;top:1136.86px;font-size:19.61px;line-height:1;white-space:nowrap;transform:scaleX(1.113);transform-origin:0 0;color:#495057'>111111111112</span>
<span style='position:absolute;left:2057.25px;top:1121.31px;font-size:21.86px;line-height:1;white-space:nowrap;transform:scaleX(0.875);transform-origin:0 0;color:#212529'>다계좌</span>
<span style='position:absolute;left:1325.65px;top:1236.14px;font-size:12.4px;line-height:1;white-space:nowrap;transform:scaleX(1.075);transform-origin:0 0;font-weight:700;color:#ffc107'>정산 ₩8,755,930</span>
<span style='position:absolute;left:1203.85px;top:1236.14px;font-size:12.4px;line-height:1;white-space:nowrap;transform:scaleX(1.075);transform-origin:0 0;font-weight:700;color:#0dcaf0'>통신 ₩100,000</span>
<span style='position:absolute;left:1333.10px;top:1196.69px;font-size:18.29px;line-height:1;white-space:nowrap;transform:scaleX(1.0561);transform-origin:0 0;color:#495057'>₩8,855,930</span>
<span style='position:absolute;left:1712.30px;top:1214.74px;font-size:17.89px;line-height:1;white-space:nowrap;transform:scaleX(1.1042);transform-origin:0 0;color:#0d6efd'>₩8,855,930</span>
<span style='position:absolute;left:1841.86px;top:1198.74px;font-size:16.47px;line-height:1;white-space:nowrap;transform:scaleX(1.1379);transform-origin:0 0;font-weight:700;color:#000'>우리</span>
<span style='position:absolute;left:561.50px;top:1215.24px;font-size:18.23px;line-height:1;white-space:nowrap;color:#6c757d'>[000261]</span>
<span style='position:absolute;left:711.52px;top:1216.99px;font-size:15.46px;line-height:1;white-space:nowrap;transform:scaleX(0.9759);transform-origin:0 0;font-weight:700;color:#212529'>미지급금</span>
<span style='position:absolute;left:893.04px;top:1215.44px;font-size:15.67px;line-height:1;white-space:nowrap;transform:scaleX(0.9567);transform-origin:0 0;font-weight:700;color:#052c65'>직원</span>
<span style='position:absolute;left:1573.90px;top:1214.62px;font-size:18.8px;line-height:1;white-space:nowrap;transform:scaleX(1.1);transform-origin:0 0;font-family:"Liberation Mono", monospace;color:#212529'>0</span>
<span style='position:absolute;left:1841.89px;top:1227.94px;font-size:19.61px;line-height:1;white-space:nowrap;transform:scaleX(1.113);transform-origin:0 0;color:#495057'>111111111112</span>
<span style='position:absolute;left:2057.25px;top:1212.39px;font-size:21.86px;line-height:1;white-space:nowrap;transform:scaleX(0.875);transform-origin:0 0;color:#212529'>다계좌</span>
<span style='position:absolute;left:1325.65px;top:1327.22px;font-size:12.4px;line-height:1;white-space:nowrap;transform:scaleX(1.075);transform-origin:0 0;font-weight:700;color:#ffc107'>정산 ₩3,991,370</span>
<span style='position:absolute;left:1203.85px;top:1327.22px;font-size:12.4px;line-height:1;white-space:nowrap;transform:scaleX(1.075);transform-origin:0 0;font-weight:700;color:#0dcaf0'>통신 ₩100,000</span>
<span style='position:absolute;left:1333.10px;top:1287.77px;font-size:18.29px;line-height:1;white-space:nowrap;transform:scaleX(1.0561);transform-origin:0 0;color:#495057'>₩4,091,370</span>
<span style='position:absolute;left:1712.30px;top:1305.82px;font-size:17.89px;line-height:1;white-space:nowrap;transform:scaleX(1.1042);transform-origin:0 0;color:#0d6efd'>₩4,091,370</span>
<span style='position:absolute;left:1841.86px;top:1289.82px;font-size:16.47px;line-height:1;white-space:nowrap;transform:scaleX(1.1379);transform-origin:0 0;font-weight:700;color:#000'>기업</span>
<span style='position:absolute;left:561.50px;top:1306.32px;font-size:18.23px;line-height:1;white-space:nowrap;color:#6c757d'>[000262]</span>
<span style='position:absolute;left:711.52px;top:1308.07px;font-size:15.46px;line-height:1;white-space:nowrap;transform:scaleX(0.9759);transform-origin:0 0;font-weight:700;color:#212529'>미지급금</span>
<span style='position:absolute;left:893.04px;top:1306.52px;font-size:15.67px;line-height:1;white-space:nowrap;transform:scaleX(0.9567);transform-origin:0 0;font-weight:700;color:#052c65'>직원</span>
<span style='position:absolute;left:1573.90px;top:1305.69px;font-size:18.8px;line-height:1;white-space:nowrap;transform:scaleX(1.1);transform-origin:0 0;font-family:"Liberation Mono", monospace;color:#212529'>0</span>
<span style='position:absolute;left:1841.89px;top:1319.02px;font-size:19.61px;line-height:1;white-space:nowrap;transform:scaleX(1.113);transform-origin:0 0;color:#495057'>111111111112</span>
<span style='position:absolute;left:2057.25px;top:1303.47px;font-size:21.86px;line-height:1;white-space:nowrap;transform:scaleX(0.875);transform-origin:0 0;color:#212529'>다계좌</span>
<span style='position:absolute;left:1325.65px;top:1418.30px;font-size:12.4px;line-height:1;white-space:nowrap;transform:scaleX(1.075);transform-origin:0 0;font-weight:700;color:#ffc107'>정산 ₩1,024,750</span>
<span style='position:absolute;left:1203.85px;top:1418.30px;font-size:12.4px;line-height:1;white-space:nowrap;transform:scaleX(1.075);transform-origin:0 0;font-weight:700;color:#0dcaf0'>통신 ₩100,000</span>
<span style='position:absolute;left:1333.10px;top:1378.85px;font-size:18.29px;line-height:1;white-space:nowrap;transform:scaleX(1.0561);transform-origin:0 0;color:#495057'>₩1,124,750</span>
<span style='position:absolute;left:1712.30px;top:1396.90px;font-size:17.89px;line-height:1;white-space:nowrap;transform:scaleX(1.1042);transform-origin:0 0;color:#0d6efd'>₩1,124,750</span>
<span style='position:absolute;left:1843.00px;top:1380.90px;font-size:16.47px;line-height:1;white-space:nowrap;transform:scaleX(1.1379);transform-origin:0 0;font-weight:700;color:#000'>카카오뱅크</span>
<span style='position:absolute;left:561.50px;top:1397.40px;font-size:18.23px;line-height:1;white-space:nowrap;color:#6c757d'>[000263]</span>
<span style='position:absolute;left:711.52px;top:1399.15px;font-size:15.46px;line-height:1;white-space:nowrap;transform:scaleX(0.9759);transform-origin:0 0;font-weight:700;color:#212529'>미지급금</span>
<span style='position:absolute;left:893.04px;top:1397.60px;font-size:15.67px;line-height:1;white-space:nowrap;transform:scaleX(0.9567);transform-origin:0 0;font-weight:700;color:#052c65'>직원</span>
<span style='position:absolute;left:1573.90px;top:1396.78px;font-size:18.8px;line-height:1;white-space:nowrap;transform:scaleX(1.1);transform-origin:0 0;font-family:"Liberation Mono", monospace;color:#212529'>0</span>
<span style='position:absolute;left:1841.89px;top:1410.10px;font-size:19.61px;line-height:1;white-space:nowrap;transform:scaleX(1.113);transform-origin:0 0;color:#495057'>111111111112</span>
<span style='position:absolute;left:2057.25px;top:1394.55px;font-size:21.86px;line-height:1;white-space:nowrap;transform:scaleX(0.875);transform-origin:0 0;color:#212529'>다계좌</span>
<span style='position:absolute;left:1325.65px;top:1509.38px;font-size:12.4px;line-height:1;white-space:nowrap;transform:scaleX(1.075);transform-origin:0 0;font-weight:700;color:#ffc107'>정산 ₩6,916,230</span>
<span style='position:absolute;left:1203.85px;top:1509.38px;font-size:12.4px;line-height:1;white-space:nowrap;transform:scaleX(1.075);transform-origin:0 0;font-weight:700;color:#0dcaf0'>통신 ₩100,000</span>
<span style='position:absolute;left:1333.10px;top:1469.93px;font-size:18.29px;line-height:1;white-space:nowrap;transform:scaleX(1.0561);transform-origin:0 0;color:#495057'>₩7,016,230</span>
<span style='position:absolute;left:1712.30px;top:1487.98px;font-size:17.89px;line-height:1;white-space:nowrap;transform:scaleX(1.1042);transform-origin:0 0;color:#0d6efd'>₩7,016,230</span>
<span style='position:absolute;left:1843.00px;top:1471.98px;font-size:16.47px;line-height:1;white-space:nowrap;transform:scaleX(1.1379);transform-origin:0 0;font-weight:700;color:#000'>카카오뱅크</span>
<span style='position:absolute;left:561.50px;top:1488.48px;font-size:18.23px;line-height:1;white-space:nowrap;color:#6c757d'>[000264]</span>
<span style='position:absolute;left:711.52px;top:1490.23px;font-size:15.46px;line-height:1;white-space:nowrap;transform:scaleX(0.9759);transform-origin:0 0;font-weight:700;color:#212529'>미지급금</span>
<span style='position:absolute;left:893.04px;top:1488.68px;font-size:15.67px;line-height:1;white-space:nowrap;transform:scaleX(0.9567);transform-origin:0 0;font-weight:700;color:#052c65'>직원</span>
<span style='position:absolute;left:1573.90px;top:1487.86px;font-size:18.8px;line-height:1;white-space:nowrap;transform:scaleX(1.1);transform-origin:0 0;font-family:"Liberation Mono", monospace;color:#212529'>0</span>
<span style='position:absolute;left:1841.89px;top:1501.18px;font-size:19.61px;line-height:1;white-space:nowrap;transform:scaleX(1.113);transform-origin:0 0;color:#495057'>111111111112</span>
<span style='position:absolute;left:2057.25px;top:1485.63px;font-size:21.86px;line-height:1;white-space:nowrap;transform:scaleX(0.875);transform-origin:0 0;color:#212529'>다계좌</span>
<span style='position:absolute;left:1325.65px;top:1600.46px;font-size:12.4px;line-height:1;white-space:nowrap;transform:scaleX(1.075);transform-origin:0 0;font-weight:700;color:#ffc107'>정산 ₩6,315,130</span>
<span style='position:absolute;left:1203.85px;top:1600.46px;font-size:12.4px;line-height:1;white-space:nowrap;transform:scaleX(1.075);transform-origin:0 0;font-weight:700;color:#0dcaf0'>통신 ₩100,000</span>
<span style='position:absolute;left:1333.10px;top:1561.01px;font-size:18.29px;line-height:1;white-space:nowrap;transform:scaleX(1.0561);transform-origin:0 0;color:#495057'>₩6,415,130</span>
<span style='position:absolute;left:1712.30px;top:1579.06px;font-size:17.89px;line-height:1;white-space:nowrap;transform:scaleX(1.1042);transform-origin:0 0;color:#0d6efd'>₩6,415,130</span>
<span style='position:absolute;left:1841.86px;top:1563.06px;font-size:16.47px;line-height:1;white-space:nowrap;transform:scaleX(1.1379);transform-origin:0 0;font-weight:700;color:#000'>기업</span>
<span style='position:absolute;left:561.50px;top:1579.56px;font-size:18.23px;line-height:1;white-space:nowrap;color:#6c757d'>[000265]</span>
<span style='position:absolute;left:711.52px;top:1581.31px;font-size:15.46px;line-height:1;white-space:nowrap;transform:scaleX(0.9759);transform-origin:0 0;font-weight:700;color:#212529'>미지급금</span>
<span style='position:absolute;left:893.04px;top:1579.76px;font-size:15.67px;line-height:1;white-space:nowrap;transform:scaleX(0.9567);transform-origin:0 0;font-weight:700;color:#052c65'>직원</span>
<span style='position:absolute;left:1573.90px;top:1578.93px;font-size:18.8px;line-height:1;white-space:nowrap;transform:scaleX(1.1);transform-origin:0 0;font-family:"Liberation Mono", monospace;color:#212529'>0</span>
<span style='position:absolute;left:1841.89px;top:1592.26px;font-size:19.61px;line-height:1;white-space:nowrap;transform:scaleX(1.113);transform-origin:0 0;color:#495057'>111111111112</span>
<span style='position:absolute;left:2057.25px;top:1576.71px;font-size:21.86px;line-height:1;white-space:nowrap;transform:scaleX(0.875);transform-origin:0 0;color:#212529'>다계좌</span>
<span style='position:absolute;left:1325.65px;top:1691.54px;font-size:12.4px;line-height:1;white-space:nowrap;transform:scaleX(1.075);transform-origin:0 0;font-weight:700;color:#ffc107'>정산 ₩3,567,290</span>
<span style='position:absolute;left:1203.85px;top:1691.54px;font-size:12.4px;line-height:1;white-space:nowrap;transform:scaleX(1.075);transform-origin:0 0;font-weight:700;color:#0dcaf0'>통신 ₩100,000</span>
<span style='position:absolute;left:1333.10px;top:1652.09px;font-size:18.29px;line-height:1;white-space:nowrap;transform:scaleX(1.0561);transform-origin:0 0;color:#495057'>₩3,667,290</span>
<span style='position:absolute;left:1712.30px;top:1670.14px;font-size:17.89px;line-height:1;white-space:nowrap;transform:scaleX(1.1042);transform-origin:0 0;color:#0d6efd'>₩3,667,290</span>
<span style='position:absolute;left:1841.86px;top:1654.14px;font-size:16.47px;line-height:1;white-space:nowrap;transform:scaleX(1.1379);transform-origin:0 0;font-weight:700;color:#000'>국민</span>
<span style='position:absolute;left:561.50px;top:1670.64px;font-size:18.23px;line-height:1;white-space:nowrap;color:#6c757d'>[000266]</span>
<span style='position:absolute;left:711.52px;top:1672.39px;font-size:15.46px;line-height:1;white-space:nowrap;transform:scaleX(0.9759);transform-origin:0 0;font-weight:700;color:#212529'>미지급금</span>
<span style='position:absolute;left:893.04px;top:1670.84px;font-size:15.67px;line-height:1;white-space:nowrap;transform:scaleX(0.9567);transform-origin:0 0;font-weight:700;color:#052c65'>직원</span>
<span style='position:absolute;left:1573.90px;top:1670.01px;font-size:18.8px;line-height:1;white-space:nowrap;transform:scaleX(1.1);transform-origin:0 0;font-family:"Liberation Mono", monospace;color:#212529'>0</span>
<span style='position:absolute;left:1841.89px;top:1683.34px;font-size:19.61px;line-height:1;white-space:nowrap;transform:scaleX(1.113);transform-origin:0 0;color:#495057'>111111111112</span>
<span style='position:absolute;left:2057.25px;top:1667.79px;font-size:21.86px;line-height:1;white-space:nowrap;transform:scaleX(0.875);transform-origin:0 0;color:#212529'>다계좌</span>
<span style='position:absolute;left:1325.65px;top:1782.62px;font-size:12.4px;line-height:1;white-space:nowrap;transform:scaleX(1.075);transform-origin:0 0;font-weight:700;color:#ffc107'>정산 ₩3,674,100</span>
<span style='position:absolute;left:1203.85px;top:1782.62px;font-size:12.4px;line-height:1;white-space:nowrap;transform:scaleX(1.075);transform-origin:0 0;font-weight:700;color:#0dcaf0'>통신 ₩100,000</span>
<span style='position:absolute;left:1333.10px;top:1743.17px;font-size:18.29px;line-height:1;white-space:nowrap;transform:scaleX(1.0561);transform-origin:0 0;color:#495057'>₩3,774,100</span>
<span style='position:absolute;left:1712.30px;top:1761.22px;font-size:17.89px;line-height:1;white-space:nowrap;transform:scaleX(1.1042);transform-origin:0 0;color:#0d6efd'>₩3,774,100</span>
<span style='position:absolute;left:1841.86px;top:1745.22px;font-size:16.47px;line-height:1;white-space:nowrap;transform:scaleX(1.1379);transform-origin:0 0;font-weight:700;color:#000'>국민</span>
<span style='position:absolute;left:561.50px;top:1761.72px;font-size:18.23px;line-height:1;white-space:nowrap;color:#6c757d'>[000267]</span>
<span style='position:absolute;left:711.52px;top:1763.47px;font-size:15.46px;line-height:1;white-space:nowrap;transform:scaleX(0.9759);transform-origin:0 0;font-weight:700;color:#212529'>미지급금</span>
<span style='position:absolute;left:893.04px;top:1761.92px;font-size:15.67px;line-height:1;white-space:nowrap;transform:scaleX(0.9567);transform-origin:0 0;font-weight:700;color:#052c65'>직원</span>
<span style='position:absolute;left:1573.90px;top:1761.10px;font-size:18.8px;line-height:1;white-space:nowrap;transform:scaleX(1.1);transform-origin:0 0;font-family:"Liberation Mono", monospace;color:#212529'>0</span>
<span style='position:absolute;left:1841.89px;top:1774.42px;font-size:19.61px;line-height:1;white-space:nowrap;transform:scaleX(1.113);transform-origin:0 0;color:#495057'>111111111112</span>
<span style='position:absolute;left:2057.25px;top:1758.87px;font-size:21.86px;line-height:1;white-space:nowrap;transform:scaleX(0.875);transform-origin:0 0;color:#212529'>다계좌</span>
<span style='position:absolute;left:1325.65px;top:1873.70px;font-size:12.4px;line-height:1;white-space:nowrap;transform:scaleX(1.075);transform-origin:0 0;font-weight:700;color:#ffc107'>정산 ₩1,585,260</span>
<span style='position:absolute;left:1203.85px;top:1873.70px;font-size:12.4px;line-height:1;white-space:nowrap;transform:scaleX(1.075);transform-origin:0 0;font-weight:700;color:#0dcaf0'>통신 ₩100,000</span>
<span style='position:absolute;left:1333.10px;top:1834.25px;font-size:18.29px;line-height:1;white-space:nowrap;transform:scaleX(1.0561);transform-origin:0 0;color:#495057'>₩1,685,260</span>
<span style='position:absolute;left:1712.30px;top:1852.30px;font-size:17.89px;line-height:1;white-space:nowrap;transform:scaleX(1.1042);transform-origin:0 0;color:#0d6efd'>₩1,685,260</span>
<span style='position:absolute;left:1841.86px;top:1836.30px;font-size:16.47px;line-height:1;white-space:nowrap;transform:scaleX(1.1379);transform-origin:0 0;font-weight:700;color:#000'>기업</span>
<span style='position:absolute;left:561.50px;top:1852.80px;font-size:18.23px;line-height:1;white-space:nowrap;color:#6c757d'>[000268]</span>
<span style='position:absolute;left:711.52px;top:1854.55px;font-size:15.46px;line-height:1;white-space:nowrap;transform:scaleX(0.9759);transform-origin:0 0;font-weight:700;color:#212529'>미지급금</span>
<span style='position:absolute;left:893.04px;top:1853.00px;font-size:15.67px;line-height:1;white-space:nowrap;transform:scaleX(0.9567);transform-origin:0 0;font-weight:700;color:#052c65'>직원</span>
<span style='position:absolute;left:1573.90px;top:1852.17px;font-size:18.8px;line-height:1;white-space:nowrap;transform:scaleX(1.1);transform-origin:0 0;font-family:"Liberation Mono", monospace;color:#212529'>0</span>
<span style='position:absolute;left:1841.89px;top:1865.50px;font-size:19.61px;line-height:1;white-space:nowrap;transform:scaleX(1.113);transform-origin:0 0;color:#495057'>111111111112</span>
<span style='position:absolute;left:2057.25px;top:1849.95px;font-size:21.86px;line-height:1;white-space:nowrap;transform:scaleX(0.875);transform-origin:0 0;color:#212529'>다계좌</span>
<div style='position:absolute;left:485px;top:1009.2px;width:69.20000000000005px;height:885.3px;box-sizing:border-box;border:5.8px solid #000;background:#fff'></div></body></html>
